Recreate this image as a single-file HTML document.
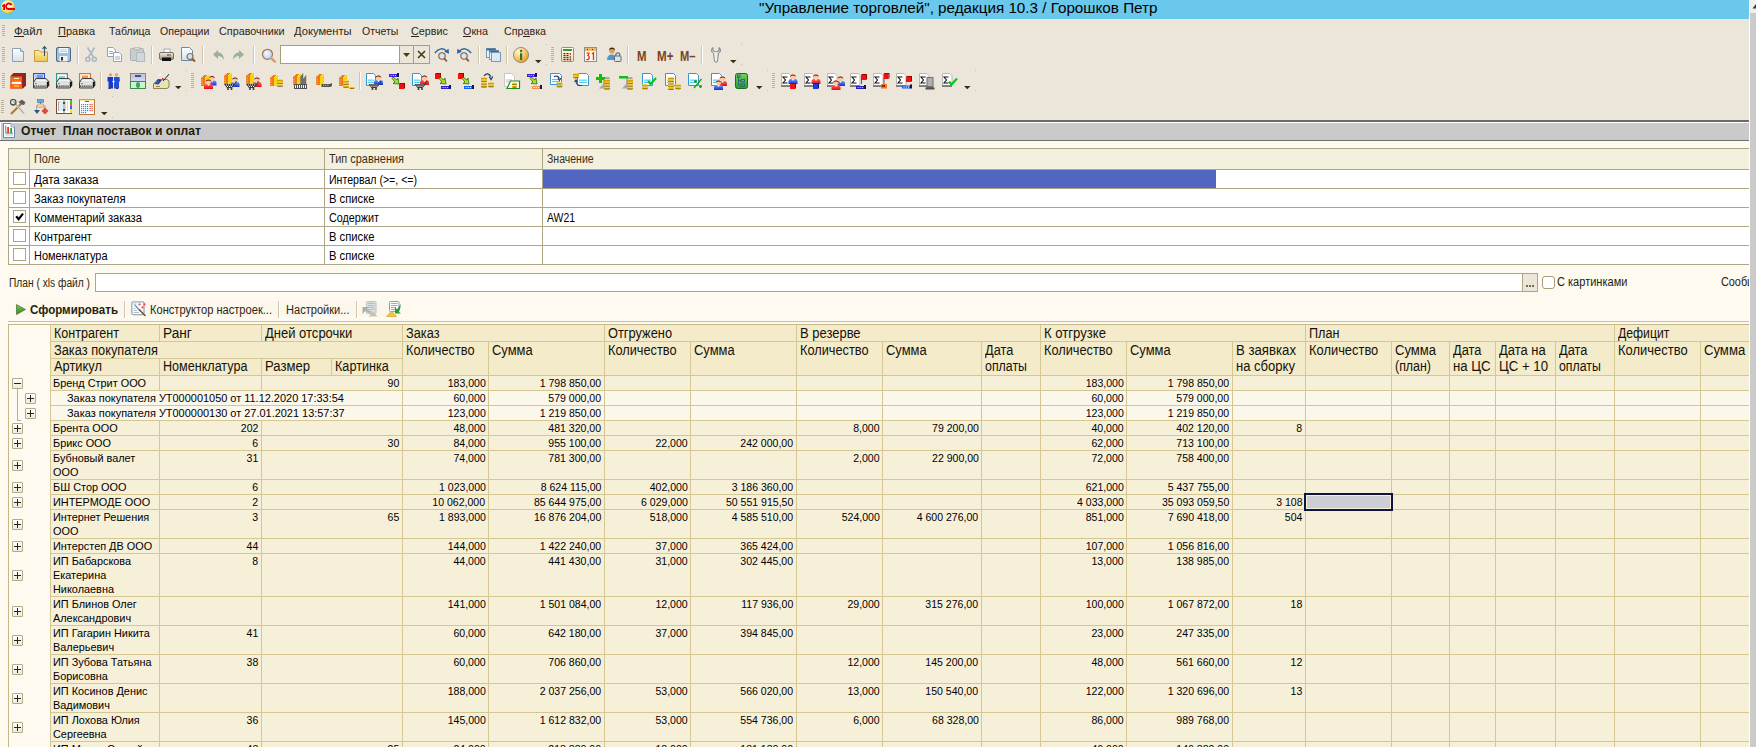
<!DOCTYPE html>
<html><head><meta charset="utf-8"><title>1C</title>
<style>
html,body{margin:0;padding:0}
body{width:1756px;height:747px;overflow:hidden;position:relative;background:#FDF9EF;font-family:"Liberation Sans",sans-serif}
div,span,svg{position:absolute;box-sizing:border-box}
.t{white-space:pre;line-height:1;transform-origin:0 0}
.t.r{transform-origin:100% 0}
</style></head><body>
<svg width="0" height="0" style="position:absolute"><defs><linearGradient id="gd" x1="0" y1="0" x2="0" y2="1"><stop offset="0" stop-color="#FFFFFF"/><stop offset="1" stop-color="#D2E0EC"/></linearGradient>
<linearGradient id="gfold" x1="0" y1="0" x2="0" y2="1"><stop offset="0" stop-color="#FBEBA6"/><stop offset="1" stop-color="#EEC650"/></linearGradient>
<linearGradient id="gprn" x1="0" y1="0" x2="0" y2="1"><stop offset="0" stop-color="#F6F2EC"/><stop offset="1" stop-color="#A08A74"/></linearGradient>
<radialGradient id="glens" cx="0.4" cy="0.4" r="0.6"><stop offset="0" stop-color="#F4F8FF"/><stop offset="1" stop-color="#BCD4F0"/></radialGradient>
<radialGradient id="ginfo" cx="0.35" cy="0.3" r="0.75"><stop offset="0" stop-color="#FFF6DC"/><stop offset="0.55" stop-color="#F8C870"/><stop offset="1" stop-color="#E89428"/></radialGradient>
<linearGradient id="gcalc" x1="0" y1="0" x2="0" y2="1"><stop offset="0" stop-color="#FFFFFF"/><stop offset="1" stop-color="#F8D8A8"/></linearGradient>
<linearGradient id="gwr" x1="0" y1="0" x2="1" y2="0"><stop offset="0" stop-color="#C8C8C8"/><stop offset="0.5" stop-color="#F8F8F8"/><stop offset="1" stop-color="#A8A8A8"/></linearGradient>
<linearGradient id="gred" x1="0" y1="0" x2="0" y2="1"><stop offset="0" stop-color="#F86868"/><stop offset="1" stop-color="#E80808"/></linearGradient>
<linearGradient id="gblue" x1="0" y1="0" x2="0" y2="1"><stop offset="0" stop-color="#6A9AF0"/><stop offset="1" stop-color="#1030D8"/></linearGradient>
<linearGradient id="gcoin" x1="0" y1="0" x2="0" y2="1"><stop offset="0" stop-color="#FFF080"/><stop offset="0.5" stop-color="#E8B000"/><stop offset="1" stop-color="#6A4A00"/></linearGradient>
<radialGradient id="glogo" cx="0.45" cy="0.4" r="0.6"><stop offset="0" stop-color="#FFFCE8"/><stop offset="0.55" stop-color="#FAEFA0"/><stop offset="0.85" stop-color="#EED040"/><stop offset="1" stop-color="#C8A030"/></radialGradient>
<linearGradient id="gtree" x1="0" y1="0" x2="0" y2="1"><stop offset="0" stop-color="#70D060"/><stop offset="1" stop-color="#28A028"/></linearGradient></defs></svg>
<div style="left:0px;top:0px;width:1749px;height:19px;background:#6AC8EC"></div>
<svg style="left:0px;top:0px" width="16" height="15" viewBox="0 0 16 15"><circle cx="7.9" cy="6.9" r="6.9" fill="url(#glogo)"/><path d="M2 5.6 L4.2 3.9 H5 V10 H3.2 V6.2 L2 6.9 Z" fill="#E80000"/><path d="M11.6 5.2 A2.9 2.9 0 1 0 8 9.1" fill="none" stroke="#E80000" stroke-width="1.8"/><rect x="7.8" y="7.9" width="7.2" height="2.1" fill="#E80000"/></svg>
<span class="t" style="transform:scaleX(0.9820);left:758.5px;top:-0.03px;font-size:15.5px;color:#000;font-weight:400;">&quot;Управление торговлей&quot;, редакция 10.3 / Горошков Петр</span>
<div style="left:0px;top:19px;width:1749px;height:101px;background:#EBE5DA"></div>
<div style="left:2px;top:25px;width:3px;height:1px;background:#BDB394"></div>
<div style="left:2px;top:27px;width:3px;height:1px;background:#BDB394"></div>
<div style="left:2px;top:29px;width:3px;height:1px;background:#BDB394"></div>
<div style="left:2px;top:31px;width:3px;height:1px;background:#BDB394"></div>
<div style="left:2px;top:33px;width:3px;height:1px;background:#BDB394"></div>
<div style="left:2px;top:35px;width:3px;height:1px;background:#BDB394"></div>
<span class="t" style="transform:scaleX(1.0007);left:14px;top:25.79px;font-size:11.5px;color:#2E2612;font-weight:400;">Файл</span>
<div style="left:14px;top:36px;width:10px;height:1px;background:#2E2612"></div>
<span class="t" style="transform:scaleX(0.9573);left:58.2px;top:25.79px;font-size:11.5px;color:#2E2612;font-weight:400;">Правка</span>
<div style="left:58px;top:36px;width:8px;height:1px;background:#2E2612"></div>
<span class="t" style="transform:scaleX(0.9203);left:108.5px;top:25.79px;font-size:11.5px;color:#2E2612;font-weight:400;">Таблица</span>
<span class="t" style="transform:scaleX(0.9183);left:159.8px;top:25.79px;font-size:11.5px;color:#2E2612;font-weight:400;">Операции</span>
<span class="t" style="transform:scaleX(0.9401);left:218.5px;top:25.79px;font-size:11.5px;color:#2E2612;font-weight:400;">Справочники</span>
<span class="t" style="transform:scaleX(0.9716);left:294.4px;top:25.79px;font-size:11.5px;color:#2E2612;font-weight:400;">Документы</span>
<span class="t" style="transform:scaleX(0.9128);left:361.7px;top:25.79px;font-size:11.5px;color:#2E2612;font-weight:400;">Отчеты</span>
<span class="t" style="transform:scaleX(0.9342);left:410.7px;top:25.79px;font-size:11.5px;color:#2E2612;font-weight:400;">Сервис</span>
<div style="left:411px;top:36px;width:8px;height:1px;background:#2E2612"></div>
<span class="t" style="transform:scaleX(0.9389);left:462.9px;top:25.79px;font-size:11.5px;color:#2E2612;font-weight:400;">Окна</span>
<div style="left:463px;top:36px;width:8px;height:1px;background:#2E2612"></div>
<span class="t" style="transform:scaleX(0.9330);left:503.7px;top:25.79px;font-size:11.5px;color:#2E2612;font-weight:400;">Справка</span>
<div style="left:523px;top:36px;width:7px;height:1px;background:#2E2612"></div>
<div style="left:2px;top:47px;width:3px;height:1px;background:#BDB394"></div>
<div style="left:2px;top:49px;width:3px;height:1px;background:#BDB394"></div>
<div style="left:2px;top:51px;width:3px;height:1px;background:#BDB394"></div>
<div style="left:2px;top:53px;width:3px;height:1px;background:#BDB394"></div>
<div style="left:2px;top:55px;width:3px;height:1px;background:#BDB394"></div>
<div style="left:2px;top:57px;width:3px;height:1px;background:#BDB394"></div>
<div style="left:2px;top:59px;width:3px;height:1px;background:#BDB394"></div>
<div style="left:2px;top:61px;width:3px;height:1px;background:#BDB394"></div>
<svg style="left:12px;top:47px" width="18" height="17" viewBox="0 0 18 17"><path d="M0.5 1.5 H8.5 L11.5 4.5 V14.5 H0.5 Z" fill="url(#gd)" stroke="#8CA2B6"/><path d="M8.5 1.5 V4.5 H11.5" fill="#C9D6E2" stroke="#8CA2B6"/></svg>
<svg style="left:34px;top:46px" width="18" height="17" viewBox="0 0 18 17"><path d="M0.5 4.5 H5 L6.5 6 H13.5 V15.5 H0.5 Z" fill="url(#gfold)" stroke="#C49A3C"/><path d="M10.5 10 V1" stroke="#34506E" stroke-width="1.1"/><path d="M8.5 3 L10.5 0.5 L12.5 3" fill="none" stroke="#34506E" stroke-width="1.1"/></svg>
<svg style="left:56px;top:47px" width="18" height="17" viewBox="0 0 18 17"><rect x="0.5" y="0.5" width="14" height="14" rx="1.5" fill="#9EC1DD" stroke="#4E6884"/><rect x="3" y="1" width="9" height="5" fill="#F2F7FB"/><path d="M4 3 H11 M4 4.6 H11" stroke="#A8C8E0" stroke-width="0.8"/><rect x="3.5" y="9" width="8" height="5.5" fill="#F0F0F0"/><rect x="5" y="10" width="2" height="3.5" fill="#333"/></svg>
<svg style="left:85px;top:47px" width="18" height="17" viewBox="0 0 18 17"><g stroke="#A6B6C4" stroke-width="1.5" fill="none"><path d="M2.5 0.5 L8.5 10 M9.5 0.5 L3.5 10"/><circle cx="2.8" cy="12.3" r="2"/><circle cx="9.3" cy="12.3" r="2"/></g></svg>
<svg style="left:107px;top:47px" width="18" height="17" viewBox="0 0 18 17"><path d="M0.5 0.5 H6 L8.5 3 V9.5 H0.5 Z" fill="#FFF" stroke="#8CA2B6"/><path d="M6.5 5.5 H12 L14.5 8 V14.5 H6.5 Z" fill="#FFF" stroke="#8CA2B6"/><path d="M2 4.5 H6 M2 6.5 H6 M8 10 H13 M8 12 H13" stroke="#7A98B0" stroke-width="0.8"/></svg>
<svg style="left:130px;top:47px" width="18" height="17" viewBox="0 0 18 17"><rect x="0.5" y="1.5" width="13" height="12" rx="1" fill="#C8CDD2" stroke="#A8B0B8"/><rect x="4" y="0" width="6" height="3" rx="1" fill="#DCDCCC" stroke="#B0A890" stroke-width="0.8"/><rect x="6.5" y="5.5" width="8" height="9" fill="#D2D6DA" stroke="#B0B8C0"/></svg>
<svg style="left:159px;top:47px" width="18" height="17" viewBox="0 0 18 17"><rect x="5" y="2" width="6" height="5" fill="#FFF" stroke="#90A0B0" stroke-width="0.8"/><rect x="0.5" y="5.5" width="14" height="7" rx="1.5" fill="url(#gprn)" stroke="#707070"/><rect x="3" y="10.5" width="9" height="3.5" fill="#111"/><circle cx="9" cy="8" r="0.9" fill="#E02020"/><circle cx="11" cy="8" r="0.9" fill="#20B020"/></svg>
<svg style="left:181px;top:47px" width="18" height="17" viewBox="0 0 18 17"><path d="M0.5 0.5 H8.5 L11.5 3.5 V13.5 H0.5 Z" fill="url(#gd)" stroke="#6A8AA6"/><circle cx="9" cy="9.5" r="3" fill="#CFE0F4" stroke="#9A6A44" stroke-width="1.2"/><path d="M11 11.5 L14 14.5" stroke="#8A5A34" stroke-width="2"/></svg>
<svg style="left:213px;top:47px" width="18" height="17" viewBox="0 0 18 17"><path d="M0 7.5 L5 3 V5.5 C8.5 5.5 11 8 11 13 C9.5 10 8 9 5 9 V12 Z" fill="#9DB09A"/></svg>
<svg style="left:233px;top:47px" width="18" height="17" viewBox="0 0 18 17"><path d="M11 7.5 L6 3 V5.5 C2.5 5.5 0 8 0 13 C1.5 10 3 9 6 9 V12 Z" fill="#9DB09A"/></svg>
<svg style="left:261px;top:47px" width="18" height="17" viewBox="0 0 18 17"><circle cx="6.5" cy="7.3" r="5" fill="url(#glens)" stroke="#A27450" stroke-width="1.2"/><path d="M10.3 11.2 L13.8 14.6" stroke="#D4A07A" stroke-width="2.6" stroke-linecap="round"/></svg>
<div style="left:77px;top:46px;width:1px;height:18px;background:#CFC6AC"></div>
<div style="left:78px;top:46px;width:1px;height:18px;background:#FFFFFF"></div>
<div style="left:151px;top:46px;width:1px;height:18px;background:#CFC6AC"></div>
<div style="left:152px;top:46px;width:1px;height:18px;background:#FFFFFF"></div>
<div style="left:202px;top:46px;width:1px;height:18px;background:#CFC6AC"></div>
<div style="left:203px;top:46px;width:1px;height:18px;background:#FFFFFF"></div>
<div style="left:253px;top:46px;width:1px;height:18px;background:#CFC6AC"></div>
<div style="left:254px;top:46px;width:1px;height:18px;background:#FFFFFF"></div>
<div style="left:280px;top:45px;width:150px;height:19px;background:#A79E7C"></div>
<div style="left:281px;top:46px;width:118px;height:17px;background:#FFFFFF"></div>
<div style="left:400px;top:46px;width:13px;height:17px;background:#EBE5DA"></div>
<div style="left:414px;top:46px;width:15px;height:17px;background:#EBE5DA"></div>
<svg style="left:403px;top:53px" width="7" height="4" viewBox="0 0 7 4"><path d="M0 0 L7 0 L3.5 4 Z" fill="#4A3A10"/></svg>
<svg style="left:417px;top:50px" width="9" height="9" viewBox="0 0 9 9"><path d="M1 1 L8 8 M8 1 L1 8" stroke="#4A3A10" stroke-width="1.6"/></svg>
<svg style="left:434px;top:47px" width="18" height="17" viewBox="0 0 18 17"><path d="M0.8 6 Q7 -1.5 13 4.2" fill="none" stroke="#2A64A0" stroke-width="1.3"/><path d="M10.2 4.8 L15 6.8 L14.6 1.8 Z" fill="#2A64A0"/><circle cx="8" cy="9" r="3.2" fill="#D4E4F6" stroke="#8A5A3A" stroke-width="1.1"/><path d="M10.2 11.4 L12.8 14.4" stroke="#8A5A3A" stroke-width="1.8"/></svg>
<svg style="left:457px;top:47px" width="18" height="17" viewBox="0 0 18 17"><path d="M14.2 6 Q8 -1.5 2 4.2" fill="none" stroke="#2A64A0" stroke-width="1.3"/><path d="M4.8 4.8 L0 6.8 L0.4 1.8 Z" fill="#2A64A0"/><circle cx="7" cy="9" r="3.2" fill="#D4E4F6" stroke="#8A5A3A" stroke-width="1.1"/><path d="M9.2 11.4 L11.8 14.4" stroke="#8A5A3A" stroke-width="1.8"/></svg>
<svg style="left:486px;top:47px" width="18" height="17" viewBox="0 0 18 17"><rect x="0.5" y="1.5" width="9" height="9" fill="#E8F0F8" stroke="#7A9AB8"/><rect x="0.5" y="1.5" width="9" height="2" fill="#3E6A96"/><rect x="3.5" y="3.5" width="9" height="9" fill="#E8F0F8" stroke="#7A9AB8"/><rect x="3.5" y="3.5" width="9" height="2" fill="#3E6A96"/><rect x="5.5" y="5.5" width="9" height="9" fill="#DCE8F4" stroke="#7A9AB8"/></svg>
<svg style="left:513px;top:47px" width="18" height="17" viewBox="0 0 18 17"><circle cx="8" cy="8" r="7.6" fill="url(#ginfo)" stroke="#8A7E6A" stroke-width="0.8"/><rect x="7" y="6.2" width="2.2" height="6.8" fill="#2E7A1E"/><circle cx="8.1" cy="4" r="1.2" fill="#2E7A1E"/></svg>
<div style="left:478px;top:46px;width:1px;height:18px;background:#CFC6AC"></div>
<div style="left:479px;top:46px;width:1px;height:18px;background:#FFFFFF"></div>
<div style="left:506px;top:46px;width:1px;height:18px;background:#CFC6AC"></div>
<div style="left:507px;top:46px;width:1px;height:18px;background:#FFFFFF"></div>
<svg style="left:535px;top:60px" width="7" height="4" viewBox="0 0 7 4"><path d="M0 0 H6.5 L3.25 3.2 Z" fill="#3A2E10"/></svg>
<div style="left:546px;top:44px;width:1px;height:1px;background:#C8BFA8"></div>
<div style="left:546px;top:64px;width:1px;height:1px;background:#C8BFA8"></div>
<div style="left:551px;top:47px;width:3px;height:1px;background:#BDB394"></div>
<div style="left:551px;top:49px;width:3px;height:1px;background:#BDB394"></div>
<div style="left:551px;top:51px;width:3px;height:1px;background:#BDB394"></div>
<div style="left:551px;top:53px;width:3px;height:1px;background:#BDB394"></div>
<div style="left:551px;top:55px;width:3px;height:1px;background:#BDB394"></div>
<div style="left:551px;top:57px;width:3px;height:1px;background:#BDB394"></div>
<div style="left:551px;top:59px;width:3px;height:1px;background:#BDB394"></div>
<div style="left:551px;top:61px;width:3px;height:1px;background:#BDB394"></div>
<svg style="left:561px;top:47px" width="18" height="17" viewBox="0 0 18 17"><rect x="0.5" y="0.5" width="12" height="14" rx="1" fill="url(#gcalc)" stroke="#8A9098"/><rect x="2" y="2" width="9" height="2" fill="#3A9A2A"/><rect x="2.5" y="6" width="2" height="1.2" fill="#333"/><rect x="2.5" y="8" width="2" height="1.2" fill="#333"/><rect x="2.5" y="10" width="2" height="1.2" fill="#333"/><rect x="2.5" y="12" width="2" height="1.2" fill="#333"/><rect x="5.5" y="6" width="2" height="1.2" fill="#333"/><rect x="5.5" y="8" width="2" height="1.2" fill="#333"/><rect x="5.5" y="10" width="2" height="1.2" fill="#333"/><rect x="5.5" y="12" width="2" height="1.2" fill="#333"/><rect x="8.7" y="6" width="1.2" height="2" fill="#E02020"/><circle cx="9.3" cy="10" r="0.8" fill="#333"/><rect x="8.7" y="11.5" width="1.2" height="2" fill="#333"/></svg>
<svg style="left:584px;top:47px" width="18" height="17" viewBox="0 0 18 17"><rect x="0.5" y="0.5" width="12" height="14" fill="#FFF6E8" stroke="#8A9098"/><rect x="1" y="1" width="11" height="3" fill="#F2B860"/><rect x="3" y="2" width="1" height="1" fill="#333"/><rect x="8" y="2" width="1" height="1" fill="#333"/><path d="M2.5 6 H5 L3.8 8.5 Q5.5 8.8 5.2 11 Q4.6 13.2 2.3 12.5" fill="none" stroke="#E03020" stroke-width="1.2"/><path d="M8 7 L9.5 5.8 V13" fill="none" stroke="#E03020" stroke-width="1.3"/></svg>
<svg style="left:607px;top:47px" width="18" height="17" viewBox="0 0 18 17"><circle cx="5" cy="3.8" r="2.8" fill="#E0A050"/><path d="M2 3.5 A3 3 0 0 1 8 3.5 L7.2 2.5 Q5 1.5 2.8 2.5 Z" fill="#3A2A1A"/><path d="M0 13 Q0 7.5 5 7.5 Q7.5 7.5 8.5 9 V13 Z" fill="#4A9AD0"/><rect x="7.5" y="9" width="6.5" height="5.5" rx="1" fill="#DDE4EA" stroke="#5A6A78"/><path d="M8.8 9 V7.8 A2 2 0 0 1 12.8 7.8 V9" fill="none" stroke="#5A6A78" stroke-width="1.2"/></svg>
<div style="left:627px;top:46px;width:1px;height:18px;background:#CFC6AC"></div>
<div style="left:628px;top:46px;width:1px;height:18px;background:#FFFFFF"></div>
<span class="t" style="transform:scaleX(0.8139);left:636.8px;top:48.63px;font-size:14px;color:#7A4420;font-weight:700;">M</span>
<span class="t" style="transform:scaleX(0.8315);left:656.8px;top:48.63px;font-size:14px;color:#7A4420;font-weight:700;">M+</span>
<span class="t" style="transform:scaleX(0.7968);left:679.8px;top:48.63px;font-size:14px;color:#7A4420;font-weight:700;">M–</span>
<div style="left:701px;top:46px;width:1px;height:18px;background:#CFC6AC"></div>
<div style="left:702px;top:46px;width:1px;height:18px;background:#FFFFFF"></div>
<svg style="left:711px;top:47px" width="11" height="17" viewBox="0 0 11 17"><path d="M2 0.5 C-0.2 2 0 5.2 2.6 6.5 L3.5 14 C3.6 15.6 6.4 15.6 6.5 14 L7.4 6.5 C10 5.2 10.2 2 8 0.5 V3.6 L5 5 L2 3.6 Z" fill="url(#gwr)" stroke="#6E6E6E" stroke-width="0.8"/></svg>
<svg style="left:730px;top:60px" width="7" height="4" viewBox="0 0 7 4"><path d="M0 0 H6.5 L3.25 3.2 Z" fill="#3A2E10"/></svg>
<div style="left:741px;top:44px;width:1px;height:1px;background:#C8BFA8"></div>
<div style="left:741px;top:64px;width:1px;height:1px;background:#C8BFA8"></div>
<div style="left:2px;top:73px;width:3px;height:1px;background:#BDB394"></div>
<div style="left:2px;top:75px;width:3px;height:1px;background:#BDB394"></div>
<div style="left:2px;top:77px;width:3px;height:1px;background:#BDB394"></div>
<div style="left:2px;top:79px;width:3px;height:1px;background:#BDB394"></div>
<div style="left:2px;top:81px;width:3px;height:1px;background:#BDB394"></div>
<div style="left:2px;top:83px;width:3px;height:1px;background:#BDB394"></div>
<div style="left:2px;top:85px;width:3px;height:1px;background:#BDB394"></div>
<div style="left:2px;top:87px;width:3px;height:1px;background:#BDB394"></div>
<svg style="left:10px;top:73px" width="17" height="17" viewBox="0 0 17 17"><path d="M0.5 3 L3.5 0 H16 V12.5 L13 15.5 H0.5 Z" fill="#8A2828"/><rect x="1" y="3.5" width="11" height="4.5" fill="#FF6A10"/><rect x="4" y="5" width="5" height="1" fill="#F8F0A0"/><rect x="1.5" y="8.5" width="10" height="2.5" fill="#F8F8F8"/><rect x="0" y="11" width="12" height="4.5" fill="#FF6A10"/><rect x="4" y="12.5" width="5" height="1" fill="#F8F0A0"/></svg>
<svg style="left:33px;top:73px" width="18" height="17" viewBox="0 0 18 17"><rect x="0.6" y="0.6" width="10.8" height="7.8" fill="#FFFFFF" stroke="#1850F0" stroke-width="1.2"/><rect x="2" y="2" width="8" height="4" fill="#A8C8F8"/><path d="M5 1.5 V7 M7 1.5 V7 M9 1.5 V7" stroke="#1850F0" stroke-width="0.8"/><path d="M0.5 9.5 L3 5.5 H13 L15.8 8.5 V12.5 L13.8 15 H0.5 Z" fill="#D0D0D0" stroke="#303030" stroke-width="0.9"/><path d="M3.5 6.5 H12.5 L14.5 8.5 H1.8 Z" fill="#F4F4F4"/><rect x="1" y="9.5" width="13" height="2.2" fill="#E6E6E6"/><rect x="2" y="10" width="1.6" height="1.2" fill="#10C010"/><path d="M1 13.3 H13.5" stroke="#505050" stroke-width="1.6" stroke-dasharray="1.2 0.9"/><path d="M13.8 9 L15.8 8.5 V12.5 L13.8 15 Z" fill="#101010"/></svg>
<svg style="left:56px;top:73px" width="18" height="17" viewBox="0 0 18 17"><rect x="0.6" y="0.6" width="10.8" height="7.8" fill="#FFFFFF" stroke="#20A0A0" stroke-width="1.2"/><path d="M3 4 H9 M3 6 H8" stroke="#20A0A0" stroke-width="1.2"/><path d="M0.5 9.5 L3 5.5 H13 L15.8 8.5 V12.5 L13.8 15 H0.5 Z" fill="#D0D0D0" stroke="#303030" stroke-width="0.9"/><path d="M3.5 6.5 H12.5 L14.5 8.5 H1.8 Z" fill="#F4F4F4"/><rect x="1" y="9.5" width="13" height="2.2" fill="#E6E6E6"/><rect x="2" y="10" width="1.6" height="1.2" fill="#10C010"/><path d="M1 13.3 H13.5" stroke="#505050" stroke-width="1.6" stroke-dasharray="1.2 0.9"/><path d="M13.8 9 L15.8 8.5 V12.5 L13.8 15 Z" fill="#101010"/></svg>
<svg style="left:79px;top:73px" width="18" height="17" viewBox="0 0 18 17"><rect x="0.6" y="0.6" width="10.8" height="7.8" fill="#FFFFFF" stroke="#F07010" stroke-width="1.2"/><rect x="3" y="2.5" width="6" height="3" fill="#F89050"/><path d="M0.5 9.5 L3 5.5 H13 L15.8 8.5 V12.5 L13.8 15 H0.5 Z" fill="#D0D0D0" stroke="#303030" stroke-width="0.9"/><path d="M3.5 6.5 H12.5 L14.5 8.5 H1.8 Z" fill="#F4F4F4"/><rect x="1" y="9.5" width="13" height="2.2" fill="#E6E6E6"/><rect x="2" y="10" width="1.6" height="1.2" fill="#10C010"/><path d="M1 13.3 H13.5" stroke="#505050" stroke-width="1.6" stroke-dasharray="1.2 0.9"/><path d="M13.8 9 L15.8 8.5 V12.5 L13.8 15 Z" fill="#101010"/></svg>
<svg style="left:107px;top:73px" width="14" height="17" viewBox="0 0 14 17"><circle cx="3.5" cy="1.8" r="1.6" fill="#D8A070"/><circle cx="9.5" cy="1.8" r="1.6" fill="#D8A070"/><path d="M0.5 4 H6 V15.5 H1.5 V8 L0.5 9 Z" fill="#1838C8"/><path d="M7 4 H12.5 L13 9 L12 8 V15.5 H7 Z" fill="#2050D8"/><path d="M5 8.5 L6.5 7.5 L8 8.5 L6.5 10 Z" fill="#FFFFFF"/><rect x="1.5" y="15" width="2" height="1" fill="#602020"/><rect x="9" y="15" width="2" height="1" fill="#602020"/></svg>
<svg style="left:130px;top:73px" width="17" height="17" viewBox="0 0 17 17"><rect x="0.5" y="0.5" width="15" height="15" fill="#D8E8D8" stroke="#707070" stroke-width="0.8"/><rect x="1" y="1" width="14" height="4" fill="#C8C8C8"/><rect x="1" y="5" width="14" height="3.5" fill="#D0D0F8"/><rect x="0.5" y="8.5" width="15" height="7" fill="#C8F8C8" stroke="#408A50"/><ellipse cx="8" cy="12" rx="2" ry="3" fill="#40A070"/><rect x="5" y="2" width="6" height="2" fill="#4050A0"/></svg>
<svg style="left:153px;top:73px" width="17" height="17" viewBox="0 0 17 17"><path d="M0.5 11 L5 6.5 H14 L16 8 V14 L14 15.5 H0.5 Z" fill="#E8E4B8" stroke="#707040" stroke-width="0.8"/><path d="M1 11 L5 6 L9 7 L5.5 11.5 Z" fill="#2040A0"/><path d="M2.5 10 H5 M3.5 8.5 H6.5" stroke="#80C0E0" stroke-width="0.7" stroke-dasharray="0.8 0.8"/><rect x="9" y="5" width="1.5" height="1.5" fill="#F02020"/><path d="M10 8 L14.5 3 Q15.5 1.5 16 1" fill="none" stroke="#202020" stroke-width="1"/><circle cx="7" cy="1.6" r="1.6" fill="#F0F0FF"/><rect x="3" y="13" width="4" height="1" fill="#C87030"/></svg>
<div style="left:100px;top:72px;width:1px;height:18px;background:#CFC6AC"></div>
<div style="left:101px;top:72px;width:1px;height:18px;background:#FFFFFF"></div>
<svg style="left:175px;top:86px" width="7" height="4" viewBox="0 0 7 4"><path d="M0 0 H6.5 L3.25 3.2 Z" fill="#3A2E10"/></svg>
<div style="left:186px;top:70px;width:1px;height:1px;background:#C8BFA8"></div>
<div style="left:186px;top:90px;width:1px;height:1px;background:#C8BFA8"></div>
<div style="left:191px;top:73px;width:3px;height:1px;background:#BDB394"></div>
<div style="left:191px;top:75px;width:3px;height:1px;background:#BDB394"></div>
<div style="left:191px;top:77px;width:3px;height:1px;background:#BDB394"></div>
<div style="left:191px;top:79px;width:3px;height:1px;background:#BDB394"></div>
<div style="left:191px;top:81px;width:3px;height:1px;background:#BDB394"></div>
<div style="left:191px;top:83px;width:3px;height:1px;background:#BDB394"></div>
<div style="left:191px;top:85px;width:3px;height:1px;background:#BDB394"></div>
<div style="left:191px;top:87px;width:3px;height:1px;background:#BDB394"></div>
<svg style="left:201px;top:73px" width="18" height="17" viewBox="0 0 18 17"><path d="M0 4.5 L2.5 2 H8 V10.5 L5.5 13 H0 Z" fill="#F07818"/><path d="M4 4.5 L6.5 2 H8 V10.5 L6.5 13 H4 Z" fill="#F6D400"/><path d="M1 6.5 V12 M5 6.5 V12" stroke="#FFE8A0" stroke-width="0.8" stroke-dasharray="1 1.2"/><path d="M0.5 4.5 L3 2 M4.5 4.5 L7 2" stroke="#FFF0C0" stroke-width="0.8"/><path d="M6.5 12.5 V9.5 Q6.5 7.5 9.0 7.5 H13.0 Q15.5 7.5 15.5 9.5 V12.5 Z" fill="url(#gblue)"/><path d="M9.5 7.5 L11.0 9.5 L12.5 7.5 Z" fill="#F0F0F0"/><circle cx="11.0" cy="5.1" r="2.6" fill="#FFC8A0"/><path d="M8.2 5.7 A2.8 2.8 0 0 1 13.8 5.7 L13.3 4.7 Q11.0 3.5 8.7 4.7 Z" fill="#6A1A10"/><path d="M3 16 V13 Q3 11 5.5 11 H9.5 Q12 11 12 13 V16 Z" fill="url(#gred)"/><path d="M6 11 L7.5 13 L9 11 Z" fill="#F0F0F0"/><circle cx="7.5" cy="8.6" r="2.6" fill="#FFC8A0"/><path d="M4.7 9.2 A2.8 2.8 0 0 1 10.3 9.2 L9.8 8.2 Q7.5 7 5.2 8.2 Z" fill="#6A1A10"/></svg>
<svg style="left:224px;top:73px" width="18" height="17" viewBox="0 0 18 17"><path d="M0 2.5 L2.5 0 H8 V8.5 L5.5 11 H0 Z" fill="#F07818"/><path d="M4 2.5 L6.5 0 H8 V8.5 L6.5 11 H4 Z" fill="#F6D400"/><path d="M1 4.5 V10 M5 4.5 V10" stroke="#FFE8A0" stroke-width="0.8" stroke-dasharray="1 1.2"/><path d="M0.5 2.5 L3 0 M4.5 2.5 L7 0" stroke="#FFF0C0" stroke-width="0.8"/><path d="M6.5 14 V11 Q6.5 9 9.0 9 H13.0 Q15.5 9 15.5 11 V14 Z" fill="url(#gblue)"/><path d="M9.5 9 L11.0 11 L12.5 9 Z" fill="#F0F0F0"/><circle cx="11.0" cy="6.6" r="2.6" fill="#FFC8A0"/><path d="M8.2 7.2 A2.8 2.8 0 0 1 13.8 7.2 L13.3 6.2 Q11.0 5 8.7 6.2 Z" fill="#6A1A10"/><path d="M0 11 H10 L12 8 L13 8.6 L10.6 12 L8 15 H3 Z" fill="#3A3A3A"/><path d="M2 12 H9 M3 13.5 H8" stroke="#FFFFFF" stroke-width="0.9" stroke-dasharray="1 1"/><circle cx="4" cy="16" r="1" fill="#303030"/><circle cx="7.5" cy="16" r="1" fill="#303030"/></svg>
<svg style="left:246px;top:73px" width="18" height="17" viewBox="0 0 18 17"><path d="M0 2.5 L2.5 0 H8 V8.5 L5.5 11 H0 Z" fill="#F07818"/><path d="M4 2.5 L6.5 0 H8 V8.5 L6.5 11 H4 Z" fill="#F6D400"/><path d="M1 4.5 V10 M5 4.5 V10" stroke="#FFE8A0" stroke-width="0.8" stroke-dasharray="1 1.2"/><path d="M0.5 2.5 L3 0 M4.5 2.5 L7 0" stroke="#FFF0C0" stroke-width="0.8"/><path d="M6.5 14 V11 Q6.5 9 9.0 9 H13.0 Q15.5 9 15.5 11 V14 Z" fill="url(#gred)"/><path d="M9.5 9 L11.0 11 L12.5 9 Z" fill="#F0F0F0"/><circle cx="11.0" cy="6.6" r="2.6" fill="#FFC8A0"/><path d="M8.2 7.2 A2.8 2.8 0 0 1 13.8 7.2 L13.3 6.2 Q11.0 5 8.7 6.2 Z" fill="#6A1A10"/><path d="M0 11 H10 L12 8 L13 8.6 L10.6 12 L8 15 H3 Z" fill="#3A3A3A"/><path d="M2 12 H9 M3 13.5 H8" stroke="#FFFFFF" stroke-width="0.9" stroke-dasharray="1 1"/><circle cx="4" cy="16" r="1" fill="#303030"/><circle cx="7.5" cy="16" r="1" fill="#303030"/></svg>
<svg style="left:270px;top:73px" width="18" height="17" viewBox="0 0 18 17"><path d="M0 4.5 L2.5 2 H8 V10.5 L5.5 13 H0 Z" fill="#F07818"/><path d="M4 4.5 L6.5 2 H8 V10.5 L6.5 13 H4 Z" fill="#F6D400"/><path d="M1 6.5 V12 M5 6.5 V12" stroke="#FFE8A0" stroke-width="0.8" stroke-dasharray="1 1.2"/><path d="M0.5 4.5 L3 2 M4.5 4.5 L7 2" stroke="#FFF0C0" stroke-width="0.8"/><rect x="7" y="6.0" width="6" height="2.6" rx="1.2" fill="url(#gcoin)"/><rect x="7" y="8.6" width="6" height="2.6" rx="1.2" fill="url(#gcoin)"/><rect x="7" y="11.2" width="6" height="2.6" rx="1.2" fill="url(#gcoin)"/></svg>
<svg style="left:293px;top:73px" width="16" height="17" viewBox="0 0 16 17"><path d="M0 3.5 L2.5 1 H8 V9.5 L5.5 12 H0 Z" fill="#F07818"/><path d="M4 3.5 L6.5 1 H8 V9.5 L6.5 12 H4 Z" fill="#F6D400"/><path d="M1 5.5 V11 M5 5.5 V11" stroke="#FFE8A0" stroke-width="0.8" stroke-dasharray="1 1.2"/><path d="M0.5 3.5 L3 1 M4.5 3.5 L7 1" stroke="#FFF0C0" stroke-width="0.8"/><path d="M8 14 V4 L9.5 2 V14 M11 14 V6 L12.5 4 V14" stroke="#707070" stroke-width="1.5" fill="none"/><rect x="1" y="11" width="13" height="5" fill="#505050"/><path d="M2.5 12 V15 M4.5 12 V15 M6.5 12 V15 M8.5 12 V15 M10.5 12 V15 M12.5 12 V15" stroke="#F0F0F0" stroke-width="1"/></svg>
<svg style="left:316px;top:73px" width="17" height="17" viewBox="0 0 17 17"><path d="M0 3.5 L2.5 1 H8 V9.5 L5.5 12 H0 Z" fill="#F07818"/><path d="M4 3.5 L6.5 1 H8 V9.5 L6.5 12 H4 Z" fill="#F6D400"/><path d="M1 5.5 V11 M5 5.5 V11" stroke="#FFE8A0" stroke-width="0.8" stroke-dasharray="1 1.2"/><path d="M0.5 3.5 L3 1 M4.5 3.5 L7 1" stroke="#FFF0C0" stroke-width="0.8"/><path d="M5.5 11 H14 L16 10 V13 L14 14 H5.5 Z" fill="#505050"/><path d="M7 12.3 H13" stroke="#D8D8D8" stroke-width="1" stroke-dasharray="1 1.2"/></svg>
<svg style="left:339px;top:73px" width="17" height="17" viewBox="0 0 17 17"><path d="M0 4.5 L2.5 2 H8 V10.5 L5.5 13 H0 Z" fill="#F07818"/><path d="M4 4.5 L6.5 2 H8 V10.5 L6.5 13 H4 Z" fill="#F6D400"/><path d="M1 6.5 V12 M5 6.5 V12" stroke="#FFE8A0" stroke-width="0.8" stroke-dasharray="1 1.2"/><path d="M0.5 4.5 L3 2 M4.5 4.5 L7 2" stroke="#FFF0C0" stroke-width="0.8"/><rect x="4" y="7.0" width="6" height="2.6" rx="1.2" fill="url(#gcoin)"/><rect x="4" y="9.6" width="6" height="2.6" rx="1.2" fill="url(#gcoin)"/><rect x="4" y="12.2" width="6" height="2.6" rx="1.2" fill="url(#gcoin)"/><rect x="10.5" y="13.5" width="5" height="2.6" rx="1.2" fill="url(#gcoin)"/></svg>
<div style="left:359px;top:72px;width:1px;height:18px;background:#CFC6AC"></div>
<div style="left:360px;top:72px;width:1px;height:18px;background:#FFFFFF"></div>
<svg style="left:366px;top:73px" width="18" height="17" viewBox="0 0 18 17"><path d="M0.5 0.5 H7.5 L9.5 2.5 V12.5 H0.5 Z" fill="#FFFFFF" stroke="#3A96D0"/><path d="M2 7.15 H8 M2 9.36 H8" stroke="#18C0F0" stroke-width="0.9"/><path d="M8 12 V9 Q8 7 10.5 7 H14.5 Q17 7 17 9 V12 Z" fill="url(#gblue)"/><path d="M11 7 L12.5 9 L14 7 Z" fill="#F0F0F0"/><circle cx="12.5" cy="4.6" r="2.6" fill="#FFC8A0"/><path d="M9.7 5.2 A2.8 2.8 0 0 1 15.3 5.2 L14.8 4.2 Q12.5 3 10.2 4.2 Z" fill="#6A1A10"/><path d="M2.5 11 H12.5 L14.5 8 L15.5 8.6 L13.1 12 L10.5 15 H5.5 Z" fill="#3A3A3A"/><path d="M4.5 12 H11.5 M5.5 13.5 H10.5" stroke="#FFFFFF" stroke-width="0.9" stroke-dasharray="1 1"/><circle cx="6.5" cy="16" r="1" fill="#303030"/><circle cx="10.0" cy="16" r="1" fill="#303030"/></svg>
<svg style="left:389px;top:73px" width="18" height="17" viewBox="0 0 18 17"><path d="M0 1 H8 L10 0 V3 L8 4 H0 Z" fill="#4020E0"/><rect x="8" y="0" width="2" height="4" fill="#101850"/><path d="M1.5 2.5 H7" stroke="#F0E000" stroke-width="1.1" stroke-dasharray="1.1 1.1"/><path d="M4 4 L8 7 L9 5 L10 11 L4 10.5 L6 9 L3 5.5 Z" fill="#A8E020" stroke="#1A6010" stroke-width="0.7"/><rect x="10" y="11" width="5" height="5" fill="#F01010"/><path d="M10 11 L11 10 H16 V15 L15 16 V11 Z" fill="#A00000"/></svg>
<svg style="left:412px;top:73px" width="18" height="17" viewBox="0 0 18 17"><path d="M0.5 0.5 H7.5 L9.5 2.5 V12.5 H0.5 Z" fill="#FFFFFF" stroke="#3A96D0"/><path d="M2 7.15 H8 M2 9.36 H8" stroke="#18C0F0" stroke-width="0.9"/><path d="M8 12 V9 Q8 7 10.5 7 H14.5 Q17 7 17 9 V12 Z" fill="url(#gred)"/><path d="M11 7 L12.5 9 L14 7 Z" fill="#F0F0F0"/><circle cx="12.5" cy="4.6" r="2.6" fill="#FFC8A0"/><path d="M9.7 5.2 A2.8 2.8 0 0 1 15.3 5.2 L14.8 4.2 Q12.5 3 10.2 4.2 Z" fill="#6A1A10"/><path d="M2.5 11 H12.5 L14.5 8 L15.5 8.6 L13.1 12 L10.5 15 H5.5 Z" fill="#3A3A3A"/><path d="M4.5 12 H11.5 M5.5 13.5 H10.5" stroke="#FFFFFF" stroke-width="0.9" stroke-dasharray="1 1"/><circle cx="6.5" cy="16" r="1" fill="#303030"/><circle cx="10.0" cy="16" r="1" fill="#303030"/></svg>
<svg style="left:435px;top:73px" width="18" height="17" viewBox="0 0 18 17"><rect x="0" y="1" width="5" height="5" fill="#F01010"/><path d="M0 1 L1 0 H6 V5 L5 6 V1 Z" fill="#A00000"/><path d="M5 4 L9 7 L10 5 L11 11 L5 10.5 L7 9 L4 5.5 Z" fill="#A8E020" stroke="#1A6010" stroke-width="0.7"/><path d="M6 13 H14 L16 12 V15 L14 16 H6 Z" fill="#3020D8"/><rect x="14" y="12" width="2" height="4" fill="#101850"/><path d="M7.5 14.5 H13" stroke="#F0E000" stroke-width="1.1" stroke-dasharray="1.1 1.1"/></svg>
<svg style="left:458px;top:73px" width="18" height="17" viewBox="0 0 18 17"><rect x="0" y="1" width="5" height="5" fill="#F01010"/><path d="M0 1 L1 0 H6 V5 L5 6 V1 Z" fill="#A00000"/><path d="M5 4 L9 7 L10 5 L11 11 L5 10.5 L7 9 L4 5.5 Z" fill="#A8E020" stroke="#1A6010" stroke-width="0.7"/><path d="M6 13 H14 L16 12 V15 L14 16 H6 Z" fill="#1860F0"/><rect x="14" y="12" width="2" height="4" fill="#101850"/><path d="M7.5 14.5 H13" stroke="#FFFFFF" stroke-width="1.1" stroke-dasharray="1.1 1.1"/></svg>
<svg style="left:481px;top:73px" width="17" height="17" viewBox="0 0 17 17"><rect x="0" y="4.0" width="6" height="2.6" rx="1.2" fill="url(#gcoin)"/><rect x="0" y="6.6" width="6" height="2.6" rx="1.2" fill="url(#gcoin)"/><rect x="0" y="9.2" width="6" height="2.6" rx="1.2" fill="url(#gcoin)"/><rect x="0" y="11.8" width="6" height="2.6" rx="1.2" fill="url(#gcoin)"/><rect x="7" y="9.0" width="6" height="2.6" rx="1.2" fill="url(#gcoin)"/><rect x="7" y="11.6" width="6" height="2.6" rx="1.2" fill="url(#gcoin)"/><path d="M3 3 Q6.5 -1.5 10 3.5" fill="none" stroke="#1A3A6A" stroke-width="1.2"/><path d="M8.2 3.5 L10 6.5 L11.8 3.5" fill="none" stroke="#1A3A6A" stroke-width="1.2"/></svg>
<svg style="left:504px;top:73px" width="17" height="17" viewBox="0 0 17 17"><path d="M0.5 0.5 H7.5 L10.5 3.5 V13.5 H0.5 Z" fill="#FFFFFF" stroke="#C8C8C8"/><path d="M2 7 H8 M2 9 H8" stroke="#B0B0B0" stroke-width="0.8"/><path d="M3 15.5 L6.5 8 H15.5 V15.5 Z" fill="#FFFFFF" stroke="#208A20" stroke-width="1.2"/><rect x="8" y="9.5" width="5" height="2.6" rx="1.2" fill="url(#gcoin)"/><rect x="8" y="12.1" width="5" height="2.6" rx="1.2" fill="url(#gcoin)"/></svg>
<svg style="left:527px;top:73px" width="18" height="17" viewBox="0 0 18 17"><path d="M0 1 H8 L10 0 V3 L8 4 H0 Z" fill="#4020E0"/><rect x="8" y="0" width="2" height="4" fill="#101850"/><path d="M1.5 2.5 H7" stroke="#F0E000" stroke-width="1.1" stroke-dasharray="1.1 1.1"/><path d="M4 4 L8 7 L9 5 L10 11 L4 10.5 L6 9 L3 5.5 Z" fill="#A8E020" stroke="#1A6010" stroke-width="0.7"/><path d="M5 13 H13 L15 12 V15 L13 16 H5 Z" fill="#F09050"/><rect x="13" y="12" width="2" height="4" fill="#101850"/><path d="M6.5 14.5 H12" stroke="#FFFFFF" stroke-width="1.1" stroke-dasharray="1.1 1.1"/></svg>
<svg style="left:550px;top:73px" width="17" height="17" viewBox="0 0 17 17"><path d="M0.5 0.5 H9.5 L11.5 2.5 V11.5 H0.5 Z" fill="#FFFFFF" stroke="#3A96D0"/><path d="M2 6.6000000000000005 H10 M2 8.64 H10" stroke="#18C0F0" stroke-width="0.9"/><path d="M4 4 Q7 1.5 9.5 5.5" fill="none" stroke="#1A3A6A" stroke-width="1.1"/><path d="M8 5 L9.5 7.5 L11 5" fill="none" stroke="#1A3A6A" stroke-width="1.1"/><rect x="6.5" y="9.0" width="6" height="2.6" rx="1.2" fill="url(#gcoin)"/><rect x="6.5" y="11.6" width="6" height="2.6" rx="1.2" fill="url(#gcoin)"/></svg>
<svg style="left:573px;top:73px" width="17" height="17" viewBox="0 0 17 17"><path d="M4.5 0.5 H13.5 L15.5 2.5 V12.5 H4.5 Z" fill="#FFFFFF" stroke="#3A96D0"/><path d="M6 7.15 H14 M6 9.36 H14" stroke="#18C0F0" stroke-width="0.9"/><rect x="0" y="0.0" width="6" height="2.6" rx="1.2" fill="url(#gcoin)"/><rect x="0" y="2.6" width="6" height="2.6" rx="1.2" fill="url(#gcoin)"/><path d="M3 8 Q3 13 9 12.5" fill="none" stroke="#1A3A6A" stroke-width="1.1"/><path d="M1.5 9 L3 7 L4.5 9" fill="none" stroke="#1A3A6A" stroke-width="1.1"/></svg>
<svg style="left:596px;top:73px" width="17" height="17" viewBox="0 0 17 17"><path d="M3 15.5 L7 11 V4 H13.5 V15.5 Z" fill="#A8A8A8"/><rect x="0" y="4" width="9" height="3" fill="#10C010"/><rect x="3" y="1" width="3" height="9" fill="#10C010"/><rect x="8" y="6.0" width="6" height="2.6" rx="1.2" fill="url(#gcoin)"/><rect x="8" y="8.6" width="6" height="2.6" rx="1.2" fill="url(#gcoin)"/><rect x="8" y="11.2" width="6" height="2.6" rx="1.2" fill="url(#gcoin)"/><rect x="8" y="13.8" width="6" height="2.6" rx="1.2" fill="url(#gcoin)"/></svg>
<svg style="left:619px;top:73px" width="17" height="17" viewBox="0 0 17 17"><path d="M3 15.5 L7 11 V4 H13.5 V15.5 Z" fill="#A8A8A8"/><rect x="0" y="3" width="9" height="2.5" fill="#10C010"/><rect x="8" y="6.0" width="6" height="2.6" rx="1.2" fill="url(#gcoin)"/><rect x="8" y="8.6" width="6" height="2.6" rx="1.2" fill="url(#gcoin)"/><rect x="8" y="11.2" width="6" height="2.6" rx="1.2" fill="url(#gcoin)"/><rect x="8" y="13.8" width="6" height="2.6" rx="1.2" fill="url(#gcoin)"/></svg>
<svg style="left:642px;top:73px" width="17" height="17" viewBox="0 0 17 17"><path d="M0.5 0.5 H8.5 L10.5 2.5 V12.5 H0.5 Z" fill="#FFFFFF" stroke="#3A96D0"/><path d="M2 7.15 H9 M2 9.36 H9" stroke="#18C0F0" stroke-width="0.9"/><path d="M6 8 L8.5 11 L14 5" fill="none" stroke="#10C020" stroke-width="2.2"/><rect x="0" y="11.0" width="6" height="2.6" rx="1.2" fill="url(#gcoin)"/><rect x="0" y="13.6" width="6" height="2.6" rx="1.2" fill="url(#gcoin)"/></svg>
<svg style="left:665px;top:73px" width="17" height="17" viewBox="0 0 17 17"><path d="M0.5 0.5 H8.5 L10.5 2.5 V12.5 H0.5 Z" fill="#FFFFFF" stroke="#3A96D0"/><path d="M2 7.15 H9 M2 9.36 H9" stroke="#18C0F0" stroke-width="0.9"/><rect x="3" y="4.0" width="6" height="2.6" rx="1.2" fill="url(#gcoin)"/><rect x="3" y="6.6" width="6" height="2.6" rx="1.2" fill="url(#gcoin)"/><rect x="3" y="9.2" width="6" height="2.6" rx="1.2" fill="url(#gcoin)"/><rect x="3" y="11.8" width="6" height="2.6" rx="1.2" fill="url(#gcoin)"/><rect x="3" y="14.4" width="6" height="2.6" rx="1.2" fill="url(#gcoin)"/><rect x="10" y="11.0" width="6" height="2.6" rx="1.2" fill="url(#gcoin)"/><rect x="10" y="13.6" width="6" height="2.6" rx="1.2" fill="url(#gcoin)"/></svg>
<svg style="left:688px;top:73px" width="17" height="17" viewBox="0 0 17 17"><path d="M0.5 0.5 H8.5 L10.5 2.5 V12.5 H0.5 Z" fill="#FFFFFF" stroke="#3A96D0"/><path d="M2 7.15 H9 M2 9.36 H9" stroke="#18C0F0" stroke-width="0.9"/><path d="M6 15 L13.5 6" stroke="#10A010" stroke-width="1.2"/><circle cx="7.5" cy="8.5" r="1.4" fill="#10A010"/><circle cx="12.5" cy="13.5" r="1.4" fill="#10A010"/></svg>
<svg style="left:711px;top:73px" width="17" height="17" viewBox="0 0 17 17"><path d="M0.5 0.5 H8.5 L10.5 2.5 V12.5 H0.5 Z" fill="#FFFFFF" stroke="#3A96D0"/><path d="M2 7.15 H9 M2 9.36 H9" stroke="#18C0F0" stroke-width="0.9"/><path d="M7 13 V10 Q7 8 9.5 8 H13.5 Q16 8 16 10 V13 Z" fill="url(#gred)"/><path d="M10 8 L11.5 10 L13 8 Z" fill="#F0F0F0"/><circle cx="11.5" cy="5.6" r="2.6" fill="#FFC8A0"/><path d="M8.7 6.2 A2.8 2.8 0 0 1 14.3 6.2 L13.8 5.2 Q11.5 4 9.2 5.2 Z" fill="#6A1A10"/><path d="M3 17 V14 Q3 12 5.5 12 H9.5 Q12 12 12 14 V17 Z" fill="url(#gblue)"/><path d="M6 12 L7.5 14 L9 12 Z" fill="#F0F0F0"/><circle cx="7.5" cy="9.6" r="2.6" fill="#FFC8A0"/><path d="M4.7 10.2 A2.8 2.8 0 0 1 10.3 10.2 L9.8 9.2 Q7.5 8 5.2 9.2 Z" fill="#6A1A10"/></svg>
<svg style="left:735px;top:73px" width="14" height="17" viewBox="0 0 14 17"><rect x="0.5" y="0.5" width="12" height="15" rx="2" fill="url(#gtree)" stroke="#1A6A1A"/><path d="M3.5 3.5 V12 H6 M3.5 7.5 H6" fill="none" stroke="#2A5A8A" stroke-width="0.8"/><rect x="2.5" y="2" width="2.5" height="2.5" fill="none" stroke="#2A5A8A" stroke-width="0.8"/><rect x="6" y="6.5" width="3.5" height="2.5" fill="none" stroke="#2A5A8A" stroke-width="0.8"/><rect x="6" y="11" width="3.5" height="2.5" fill="none" stroke="#2A5A8A" stroke-width="0.8"/></svg>
<svg style="left:756px;top:86px" width="7" height="4" viewBox="0 0 7 4"><path d="M0 0 H6.5 L3.25 3.2 Z" fill="#3A2E10"/></svg>
<div style="left:767px;top:70px;width:1px;height:1px;background:#C8BFA8"></div>
<div style="left:767px;top:90px;width:1px;height:1px;background:#C8BFA8"></div>
<div style="left:772px;top:73px;width:3px;height:1px;background:#BDB394"></div>
<div style="left:772px;top:75px;width:3px;height:1px;background:#BDB394"></div>
<div style="left:772px;top:77px;width:3px;height:1px;background:#BDB394"></div>
<div style="left:772px;top:79px;width:3px;height:1px;background:#BDB394"></div>
<div style="left:772px;top:81px;width:3px;height:1px;background:#BDB394"></div>
<div style="left:772px;top:83px;width:3px;height:1px;background:#BDB394"></div>
<div style="left:772px;top:85px;width:3px;height:1px;background:#BDB394"></div>
<div style="left:772px;top:87px;width:3px;height:1px;background:#BDB394"></div>
<svg style="left:781px;top:73px" width="18" height="17" viewBox="0 0 18 17"><path d="M0.5 0.5 H8 L10 2.5 V12.5 H0.5 Z" fill="#FFFFFF" stroke="#B8B8B8"/><rect x="0" y="12.5" width="10" height="1.2" fill="#505050"/><path d="M6.5 4 H2 L4.5 7 L2 10 H6.5" fill="none" stroke="#101010" stroke-width="1.1"/><path d="M7.5 11 V8 Q7.5 6 10.0 6 H14.0 Q16.5 6 16.5 8 V11 Z" fill="url(#gblue)"/><path d="M10.5 6 L12.0 8 L13.5 6 Z" fill="#F0F0F0"/><circle cx="12.0" cy="3.6" r="2.6" fill="#FFC8A0"/><path d="M9.2 4.2 A2.8 2.8 0 0 1 14.8 4.2 L14.3 3.2 Q12.0 2 9.7 3.2 Z" fill="#6A1A10"/><rect x="9" y="11" width="5" height="5" fill="#F01010"/><path d="M9 11 L10 10 H15 V15 L14 16 V11 Z" fill="#A00000"/></svg>
<svg style="left:804px;top:73px" width="18" height="17" viewBox="0 0 18 17"><path d="M0.5 0.5 H8 L10 2.5 V12.5 H0.5 Z" fill="#FFFFFF" stroke="#B8B8B8"/><rect x="0" y="12.5" width="10" height="1.2" fill="#505050"/><path d="M6.5 4 H2 L4.5 7 L2 10 H6.5" fill="none" stroke="#101010" stroke-width="1.1"/><path d="M7.5 11 V8 Q7.5 6 10.0 6 H14.0 Q16.5 6 16.5 8 V11 Z" fill="url(#gred)"/><path d="M10.5 6 L12.0 8 L13.5 6 Z" fill="#F0F0F0"/><circle cx="12.0" cy="3.6" r="2.6" fill="#FFC8A0"/><path d="M9.2 4.2 A2.8 2.8 0 0 1 14.8 4.2 L14.3 3.2 Q12.0 2 9.7 3.2 Z" fill="#6A1A10"/><rect x="9" y="11" width="5" height="5" fill="#1838F0"/><path d="M9 11 L10 10 H15 V15 L14 16 V11 Z" fill="#081070"/></svg>
<svg style="left:827px;top:73px" width="18" height="17" viewBox="0 0 18 17"><path d="M0.5 0.5 H8 L10 2.5 V12.5 H0.5 Z" fill="#FFFFFF" stroke="#B8B8B8"/><rect x="0" y="12.5" width="10" height="1.2" fill="#505050"/><path d="M6.5 4 H2 L4.5 7 L2 10 H6.5" fill="none" stroke="#101010" stroke-width="1.1"/><path d="M9 13 V10 Q9 8 11.5 8 H15.5 Q18 8 18 10 V13 Z" fill="url(#gblue)"/><path d="M12 8 L13.5 10 L15 8 Z" fill="#F0F0F0"/><circle cx="13.5" cy="5.6" r="2.6" fill="#FFC8A0"/><path d="M10.7 6.2 A2.8 2.8 0 0 1 16.3 6.2 L15.8 5.2 Q13.5 4 11.2 5.2 Z" fill="#6A1A10"/><path d="M4.5 17 V14 Q4.5 12 7.0 12 H11.0 Q13.5 12 13.5 14 V17 Z" fill="url(#gred)"/><path d="M7.5 12 L9.0 14 L10.5 12 Z" fill="#F0F0F0"/><circle cx="9.0" cy="9.6" r="2.6" fill="#FFC8A0"/><path d="M6.2 10.2 A2.8 2.8 0 0 1 11.8 10.2 L11.3 9.2 Q9.0 8 6.7 9.2 Z" fill="#6A1A10"/></svg>
<svg style="left:850px;top:73px" width="18" height="17" viewBox="0 0 18 17"><path d="M0.5 0.5 H8 L10 2.5 V12.5 H0.5 Z" fill="#FFFFFF" stroke="#B8B8B8"/><rect x="0" y="12.5" width="10" height="1.2" fill="#505050"/><path d="M6.5 4 H2 L4.5 7 L2 10 H6.5" fill="none" stroke="#101010" stroke-width="1.1"/><rect x="11" y="5" width="1" height="6" fill="#606060"/><rect x="11" y="2" width="5" height="5" fill="#F01010"/><path d="M11 2 L12 1 H17 V6 L16 7 V2 Z" fill="#A00000"/><path d="M6 13 H14 L16 12 V15 L14 16 H6 Z" fill="#2020C0"/><rect x="14" y="12" width="2" height="4" fill="#101850"/><path d="M7.5 14.5 H13" stroke="#F0E000" stroke-width="1.1" stroke-dasharray="1.1 1.1"/></svg>
<svg style="left:873px;top:73px" width="18" height="17" viewBox="0 0 18 17"><path d="M0.5 0.5 H8 L10 2.5 V12.5 H0.5 Z" fill="#FFFFFF" stroke="#B8B8B8"/><rect x="0" y="12.5" width="10" height="1.2" fill="#505050"/><path d="M6.5 4 H2 L4.5 7 L2 10 H6.5" fill="none" stroke="#101010" stroke-width="1.1"/><rect x="10.5" y="5" width="1" height="6" fill="#606060"/><rect x="10.5" y="1" width="5" height="5" fill="#F01010"/><path d="M10.5 1 L11.5 0 H16.5 V5 L15.5 6 V1 Z" fill="#A00000"/><rect x="8" y="11" width="6" height="4.5" fill="#F07818"/><rect x="9" y="12" width="3" height="2" fill="#803000"/></svg>
<svg style="left:896px;top:73px" width="18" height="17" viewBox="0 0 18 17"><path d="M0.5 0.5 H8 L10 2.5 V12.5 H0.5 Z" fill="#FFFFFF" stroke="#B8B8B8"/><rect x="0" y="12.5" width="10" height="1.2" fill="#505050"/><path d="M6.5 4 H2 L4.5 7 L2 10 H6.5" fill="none" stroke="#101010" stroke-width="1.1"/><rect x="10" y="4" width="5" height="5" fill="#F01010"/><path d="M10 4 L11 3 H16 V8 L15 9 V4 Z" fill="#A00000"/><path d="M6 12.5 H14 L16 11.5 V14.5 L14 15.5 H6 Z" fill="#1860F0"/><rect x="14" y="11.5" width="2" height="4" fill="#101850"/><path d="M7.5 14.0 H13" stroke="#FFFFFF" stroke-width="1.1" stroke-dasharray="1.1 1.1"/></svg>
<svg style="left:919px;top:73px" width="18" height="17" viewBox="0 0 18 17"><path d="M0.5 0.5 H8 L10 2.5 V12.5 H0.5 Z" fill="#FFFFFF" stroke="#B8B8B8"/><rect x="0" y="12.5" width="10" height="1.2" fill="#505050"/><path d="M6.5 4 H2 L4.5 7 L2 10 H6.5" fill="none" stroke="#101010" stroke-width="1.1"/><rect x="7.5" y="4" width="7" height="11" fill="#707070"/><path d="M8.5 6 H13.5 M8.5 8 H13.5 M8.5 10 H13.5 M8.5 12 H13.5" stroke="#F0F0F0" stroke-width="1"/><rect x="6.5" y="14.5" width="9" height="2" fill="#505050"/></svg>
<svg style="left:942px;top:73px" width="18" height="17" viewBox="0 0 18 17"><path d="M0.5 0.5 H8 L10 2.5 V12.5 H0.5 Z" fill="#FFFFFF" stroke="#B8B8B8"/><rect x="0" y="12.5" width="10" height="1.2" fill="#505050"/><path d="M6.5 4 H2 L4.5 7 L2 10 H6.5" fill="none" stroke="#101010" stroke-width="1.1"/><path d="M7 8.5 L9.5 11.5 L15 5.5" fill="none" stroke="#10C020" stroke-width="2.2"/></svg>
<svg style="left:964px;top:86px" width="7" height="4" viewBox="0 0 7 4"><path d="M0 0 H6.5 L3.25 3.2 Z" fill="#3A2E10"/></svg>
<div style="left:975px;top:70px;width:1px;height:1px;background:#C8BFA8"></div>
<div style="left:975px;top:90px;width:1px;height:1px;background:#C8BFA8"></div>
<div style="left:1px;top:100px;width:3px;height:1px;background:#BDB394"></div>
<div style="left:1px;top:102px;width:3px;height:1px;background:#BDB394"></div>
<div style="left:1px;top:104px;width:3px;height:1px;background:#BDB394"></div>
<div style="left:1px;top:106px;width:3px;height:1px;background:#BDB394"></div>
<div style="left:1px;top:108px;width:3px;height:1px;background:#BDB394"></div>
<div style="left:1px;top:110px;width:3px;height:1px;background:#BDB394"></div>
<div style="left:1px;top:112px;width:3px;height:1px;background:#BDB394"></div>
<svg style="left:10px;top:99px" width="17" height="17" viewBox="0 0 17 17"><path d="M1 15 L11 5" stroke="#B87A20" stroke-width="2.2"/><path d="M3 2 L14 14.5" stroke="#D8D8D8" stroke-width="2"/><path d="M3 2 L14 14.5" stroke="#707070" stroke-width="0.6"/><path d="M8.5 3 L12 0.5 L15.5 3.5 L14 6 L11 5.5 Z" fill="#606060"/><circle cx="3.2" cy="3.2" r="2.8" fill="none" stroke="#505050" stroke-width="1.3"/></svg>
<svg style="left:34px;top:99px" width="16" height="17" viewBox="0 0 16 17"><rect x="3.5" y="0.5" width="6" height="3" fill="#60A8E8" stroke="#3A78B0" stroke-width="0.6"/><path d="M6.5 3.5 V5" stroke="#3A78B0"/><rect x="3.5" y="5" width="6" height="3.5" rx="1" fill="#F8D0A0" stroke="#C89060" stroke-width="0.6"/><path d="M2.5 11 V7 H3.5 M9.5 7 H11 V9" fill="none" stroke="#909090" stroke-width="0.8"/><path d="M0 11 H6 L3 15 Z" fill="#2A5A8A"/><path d="M11 8.5 L14.5 12 L11 15.5 L7.5 12 Z" fill="#E04A30"/></svg>
<svg style="left:56px;top:99px" width="17" height="17" viewBox="0 0 17 17"><rect x="0.5" y="0.5" width="15" height="14" fill="#FFFFFF" stroke="#804A30"/><rect x="1" y="1" width="14" height="13" fill="#FFFFFF"/><rect x="7.5" y="1" width="1" height="13" fill="#808080"/><circle cx="8" cy="4" r="0.9" fill="#101010"/><circle cx="8" cy="11" r="0.9" fill="#101010"/><rect x="2" y="2.5" width="1" height="1" fill="#E02020"/><path d="M3.5 3.0 H7 M9 3.0 H13" stroke="#50C0D8" stroke-width="0.9" stroke-dasharray="1 1"/><rect x="2" y="4.5" width="1" height="1" fill="#5050A0"/><path d="M3.5 5.0 H7 M9 5.0 H13" stroke="#50C0D8" stroke-width="0.9" stroke-dasharray="1 1"/><rect x="2" y="6.5" width="1" height="1" fill="#5050A0"/><path d="M3.5 7.0 H7 M9 7.0 H13" stroke="#50C0D8" stroke-width="0.9" stroke-dasharray="1 1"/><rect x="2" y="8.5" width="1" height="1" fill="#E02020"/><path d="M3.5 9.0 H7 M9 9.0 H13" stroke="#50C0D8" stroke-width="0.9" stroke-dasharray="1 1"/><rect x="2" y="10.5" width="1" height="1" fill="#5050A0"/><path d="M3.5 11.0 H7 M9 11.0 H13" stroke="#50C0D8" stroke-width="0.9" stroke-dasharray="1 1"/><rect x="14" y="1" width="2" height="3" fill="#20D020"/><rect x="14" y="4" width="2" height="3" fill="#F06020"/><rect x="14" y="7" width="2" height="3" fill="#4060E0"/><rect x="14" y="10" width="2" height="4" fill="#F0E020"/></svg>
<svg style="left:79px;top:99px" width="17" height="17" viewBox="0 0 17 17"><rect x="0.5" y="0.5" width="15" height="15" fill="#FFFFFF" stroke="#B07A40"/><rect x="0.5" y="0.5" width="15" height="1" fill="#F8C040"/><rect x="6" y="2" width="4" height="1" fill="#606060"/><rect x="2" y="5" width="1.2" height="1.2" fill="#3A8AE0"/><rect x="2" y="7" width="1.2" height="1.2" fill="#3A8AE0"/><rect x="2" y="9" width="1.2" height="1.2" fill="#3A8AE0"/><rect x="2" y="11" width="1.2" height="1.2" fill="#3A8AE0"/><rect x="4" y="5" width="1.2" height="1.2" fill="#3A8AE0"/><rect x="4" y="7" width="1.2" height="1.2" fill="#3A8AE0"/><rect x="4" y="9" width="1.2" height="1.2" fill="#3A8AE0"/><rect x="4" y="11" width="1.2" height="1.2" fill="#3A8AE0"/><rect x="6" y="5" width="1.2" height="1.2" fill="#3A8AE0"/><rect x="6" y="7" width="1.2" height="1.2" fill="#3A8AE0"/><rect x="6" y="9" width="1.2" height="1.2" fill="#3A8AE0"/><rect x="6" y="11" width="1.2" height="1.2" fill="#3A8AE0"/><rect x="8" y="5" width="1.2" height="1.2" fill="#3A8AE0"/><rect x="8" y="7" width="1.2" height="1.2" fill="#3A8AE0"/><rect x="8" y="9" width="1.2" height="1.2" fill="#3A8AE0"/><rect x="8" y="11" width="1.2" height="1.2" fill="#3A8AE0"/><rect x="10.5" y="5" width="1.2" height="1.2" fill="#E04020"/><rect x="10.5" y="7" width="1.2" height="1.2" fill="#E04020"/><rect x="10.5" y="9" width="1.2" height="1.2" fill="#E04020"/><rect x="10.5" y="11" width="1.2" height="1.2" fill="#E04020"/><rect x="12.5" y="5" width="1.2" height="1.2" fill="#E04020"/><rect x="12.5" y="7" width="1.2" height="1.2" fill="#E04020"/><rect x="12.5" y="9" width="1.2" height="1.2" fill="#E04020"/><rect x="12.5" y="11" width="1.2" height="1.2" fill="#E04020"/><rect x="2" y="13" width="1.2" height="1.2" fill="#3A8AE0"/><rect x="4" y="13" width="1.2" height="1.2" fill="#3A8AE0"/><rect x="6" y="13" width="1.2" height="1.2" fill="#3A8AE0"/></svg>
<svg style="left:101px;top:112px" width="7" height="4" viewBox="0 0 7 4"><path d="M0 0 H6.5 L3.25 3.2 Z" fill="#3A2E10"/></svg>
<div style="left:112px;top:96px;width:1px;height:1px;background:#C8BFA8"></div>
<div style="left:112px;top:117px;width:1px;height:1px;background:#C8BFA8"></div>
<div style="left:0px;top:120px;width:1749px;height:2px;background:#6B6B6B"></div>
<div style="left:0px;top:122px;width:1749px;height:1px;background:#FFFFFF"></div>
<div style="left:0px;top:123px;width:1749px;height:17px;background:#CACACA"></div>
<div style="left:0px;top:123px;width:1px;height:17px;background:#FFFFFF"></div>
<div style="left:0px;top:140px;width:1749px;height:1px;background:#6E6E6E"></div>
<svg style="left:2px;top:123px" width="14" height="16" viewBox="0 0 14 16"><path d="M1.5 0.5 H9 L12.5 4 V14.5 H1.5 Z" fill="#FFFFFF" stroke="#6A8AA6"/><path d="M9 0.5 V4 H12.5" fill="#D8E4EE" stroke="#8AA2B8" stroke-width="0.8"/><path d="M3.8 2.5 V10" stroke="#505050" stroke-width="0.8"/><rect x="5.3" y="4" width="1.6" height="6" fill="#E82020"/><rect x="8.3" y="5" width="1.6" height="5" fill="#20A020"/><path d="M3.5 10.2 H11" stroke="#606060" stroke-width="0.8"/><path d="M3.5 12 H11" stroke="#80C8E8" stroke-width="0.8"/></svg>
<span class="t" style="transform:scaleX(1.0127);left:21px;top:125.44px;font-size:12px;color:#231C0C;font-weight:700;">Отчет  План поставок и оплат</span>
<div style="left:0px;top:141px;width:1749px;height:606px;background:#FEFAEF"></div>
<div style="left:8px;top:148px;width:1741px;height:117px;background:#ADA685"></div>
<div style="left:9px;top:149px;width:1740px;height:20px;background:#F3F0DE"></div>
<div style="left:9px;top:170px;width:1740px;height:18px;background:#FFFFFF"></div>
<div style="left:9px;top:189px;width:1740px;height:18px;background:#FFFFFF"></div>
<div style="left:9px;top:208px;width:1740px;height:18px;background:#FFFFFF"></div>
<div style="left:9px;top:227px;width:1740px;height:18px;background:#FFFFFF"></div>
<div style="left:9px;top:246px;width:1740px;height:18px;background:#FFFFFF"></div>
<div style="left:29px;top:149px;width:1px;height:115px;background:#ADA685"></div>
<div style="left:324px;top:149px;width:1px;height:115px;background:#ADA685"></div>
<div style="left:542px;top:149px;width:1px;height:115px;background:#ADA685"></div>
<span class="t" style="transform:scaleX(0.9053);left:33.5px;top:153.14px;font-size:12px;color:#3A2F14;font-weight:400;">Поле</span>
<span class="t" style="transform:scaleX(0.9124);left:329px;top:153.14px;font-size:12px;color:#3A2F14;font-weight:400;">Тип сравнения</span>
<span class="t" style="transform:scaleX(0.8756);left:547.3px;top:153.14px;font-size:12px;color:#3A2F14;font-weight:400;">Значение</span>
<div style="left:13px;top:172px;width:13px;height:13px;background:#ADA685"></div>
<div style="left:14px;top:173px;width:11px;height:11px;background:#FFFFFF"></div>
<span class="t" style="transform:scaleX(0.9727);left:33.5px;top:174.24px;font-size:12px;color:#000;font-weight:400;">Дата заказа</span>
<span class="t" style="transform:scaleX(0.8808);left:329px;top:174.24px;font-size:12px;color:#000;font-weight:400;">Интервал (&gt;=, &lt;=)</span>
<div style="left:13px;top:191px;width:13px;height:13px;background:#ADA685"></div>
<div style="left:14px;top:192px;width:11px;height:11px;background:#FFFFFF"></div>
<span class="t" style="transform:scaleX(0.9392);left:33.5px;top:193.24px;font-size:12px;color:#000;font-weight:400;">Заказ покупателя</span>
<span class="t" style="transform:scaleX(0.9360);left:329px;top:193.24px;font-size:12px;color:#000;font-weight:400;">В списке</span>
<div style="left:13px;top:210px;width:13px;height:13px;background:#ADA685"></div>
<div style="left:14px;top:211px;width:11px;height:11px;background:#FFFFFF"></div>
<svg style="left:14px;top:211px" width="11" height="11" viewBox="0 0 11 11"><path d="M2.2 5.2 L4.6 8.2 L9 2.6" stroke="#000" stroke-width="2.2" fill="none"/></svg>
<span class="t" style="transform:scaleX(0.9365);left:33.5px;top:212.24px;font-size:12px;color:#000;font-weight:400;">Комментарий заказа</span>
<span class="t" style="transform:scaleX(0.8984);left:329px;top:212.24px;font-size:12px;color:#000;font-weight:400;">Содержит</span>
<span class="t" style="transform:scaleX(0.8686);left:547.3px;top:212.24px;font-size:12px;color:#000;font-weight:400;">AW21</span>
<div style="left:13px;top:229px;width:13px;height:13px;background:#ADA685"></div>
<div style="left:14px;top:230px;width:11px;height:11px;background:#FFFFFF"></div>
<span class="t" style="transform:scaleX(0.9348);left:33.5px;top:231.24px;font-size:12px;color:#000;font-weight:400;">Контрагент</span>
<span class="t" style="transform:scaleX(0.9360);left:329px;top:231.24px;font-size:12px;color:#000;font-weight:400;">В списке</span>
<div style="left:13px;top:248px;width:13px;height:13px;background:#ADA685"></div>
<div style="left:14px;top:249px;width:11px;height:11px;background:#FFFFFF"></div>
<span class="t" style="transform:scaleX(0.9127);left:33.5px;top:250.24px;font-size:12px;color:#000;font-weight:400;">Номенклатура</span>
<span class="t" style="transform:scaleX(0.9360);left:329px;top:250.24px;font-size:12px;color:#000;font-weight:400;">В списке</span>
<div style="left:543px;top:170px;width:673px;height:18px;background:#5066C0"></div>
<span class="t" style="transform:scaleX(0.8510);left:8.6px;top:276.64px;font-size:12px;color:#2E2612;font-weight:400;">План ( xls файл )</span>
<div style="left:95px;top:273px;width:1443px;height:19px;background:#ADA685"></div>
<div style="left:96px;top:274px;width:1426px;height:17px;background:#FFFFFF"></div>
<div style="left:1523px;top:274px;width:14px;height:17px;background:#ECE6DA"></div>
<div style="left:1526px;top:285px;width:2px;height:2px;background:#7A6A40"></div>
<div style="left:1529px;top:285px;width:2px;height:2px;background:#7A6A40"></div>
<div style="left:1532px;top:285px;width:2px;height:2px;background:#7A6A40"></div>
<div style="left:1542px;top:276px;width:13px;height:13px;border:1px solid #A69C78;border-radius:3px;background:#FFFFFF"></div>
<span class="t" style="transform:scaleX(0.9193);left:1556.8px;top:276.14px;font-size:12px;color:#1E1A10;font-weight:400;">С картинками</span>
<span class="t" style="transform:scaleX(0.9029);left:1720.8px;top:275.64px;font-size:12px;color:#1E1A10;font-weight:400;">Сообщ</span>
<div style="left:15px;top:301px;width:380px;height:15px;background:#FBF7EC"></div>
<svg style="left:16px;top:304px" width="10" height="11" viewBox="0 0 10 11"><defs><linearGradient id="pg" x1="0" y1="0" x2="0" y2="1"><stop offset="0" stop-color="#7CC84A"/><stop offset="1" stop-color="#2E8A1E"/></linearGradient></defs><path d="M0.5 0.5 L9.5 5.5 L0.5 10.5 Z" fill="url(#pg)" stroke="#3A5A2A" stroke-width="0.6"/></svg>
<span class="t" style="transform:scaleX(0.9626);left:29.9px;top:304.04px;font-size:12px;color:#2A1E08;font-weight:700;">Сформировать</span>
<div style="left:124px;top:301px;width:1px;height:17px;background:#CFC6AC"></div>
<div style="left:125px;top:301px;width:1px;height:17px;background:#FFFFFF"></div>
<svg style="left:131px;top:301px" width="16" height="17" viewBox="0 0 16 17"><rect x="0.8" y="0.8" width="12.2" height="12.8" rx="1.5" fill="#FFFFFF" stroke="#9AAAB8" stroke-width="1.3"/><path d="M2.5 3 H5.5 M2.5 7.5 H4.5 M2.5 9.5 H6 M2.5 11.5 H8" stroke="#A8B4C0" stroke-width="0.9"/><path d="M4 4.3 L8.5 9" stroke="#5AA0E0" stroke-width="1.6" stroke-linecap="round"/><path d="M8.5 9 L14 14.5" stroke="#7A4A20" stroke-width="1.6" stroke-linecap="round"/><circle cx="8.5" cy="3.4" r="1.1" fill="#F04848"/><circle cx="13.5" cy="3.4" r="1.1" fill="#F04848"/><circle cx="11.5" cy="6.4" r="1.1" fill="#F04848"/></svg>
<span class="t" style="transform:scaleX(0.9254);left:149.5px;top:304.04px;font-size:12px;color:#2E2612;font-weight:400;">Конструктор настроек...</span>
<div style="left:278px;top:301px;width:1px;height:17px;background:#CFC6AC"></div>
<div style="left:279px;top:301px;width:1px;height:17px;background:#FFFFFF"></div>
<span class="t" style="transform:scaleX(0.9224);left:286px;top:304.04px;font-size:12px;color:#2E2612;font-weight:400;">Настройки...</span>
<div style="left:356px;top:301px;width:1px;height:17px;background:#CFC6AC"></div>
<div style="left:357px;top:301px;width:1px;height:17px;background:#FFFFFF"></div>
<svg style="left:362px;top:301px" width="16" height="17" viewBox="0 0 16 17"><rect x="4.5" y="0.5" width="9.5" height="12" rx="0.8" fill="#DCE0E4" stroke="#B8C0C8"/><path d="M6 2.5 H12.5 M6 4.5 H12.5 M6 6.5 H12.5 M6 8.5 H12.5" stroke="#B0BCC8" stroke-width="1"/><path d="M0.5 13 V6 H7 L5 8 Q7 10.5 10 10.5 L9 12 Q5.5 12 3.5 10 Z" fill="#A8B4A0"/><path d="M6.5 15.5 L11 10.5 L15.5 15.5 Z" fill="#C8C4B4"/></svg>
<svg style="left:386px;top:301px" width="16" height="17" viewBox="0 0 16 17"><rect x="3.5" y="0.5" width="9.5" height="10" rx="0.8" fill="#F8FAFC" stroke="#8AA2B8"/><path d="M5 2.5 H11.5 M5 4.5 H11.5 M5 6.5 H10 M5 8.5 H9" stroke="#A0B0C0" stroke-width="1"/><path d="M0.5 15.5 L5.5 10 L10.5 15.5 Z" fill="#F0C840" stroke="#C89A20" stroke-width="0.6"/><path d="M9 12.5 V6 L11 8.5 Q13 6 14.5 3 Q15 8 12.5 10.5 L15 12.5 Z" fill="#2A9A2A"/></svg>
<div style="left:8px;top:321px;width:1741px;height:1px;background:#C9C0A0"></div>
<div style="left:8px;top:324px;width:1741px;height:1px;background:#C4B888"></div>
<div style="left:8px;top:324px;width:1px;height:423px;background:#C4B888"></div>
<div style="left:50px;top:325px;width:1px;height:422px;background:#D4C792"></div>
<div style="left:51px;top:325px;width:1698px;height:50px;background:#F3EBC9"></div>
<div style="left:51px;top:375px;width:1698px;height:1px;background:#D4C792"></div>
<div style="left:51px;top:341px;width:1698px;height:1px;background:#D4C792"></div>
<div style="left:51px;top:358px;width:351px;height:1px;background:#D4C792"></div>
<div style="left:402px;top:325px;width:1px;height:50px;background:#D4C792"></div>
<div style="left:604px;top:325px;width:1px;height:50px;background:#D4C792"></div>
<div style="left:796px;top:325px;width:1px;height:50px;background:#D4C792"></div>
<div style="left:1040px;top:325px;width:1px;height:50px;background:#D4C792"></div>
<div style="left:1305px;top:325px;width:1px;height:50px;background:#D4C792"></div>
<div style="left:1614px;top:325px;width:1px;height:50px;background:#D4C792"></div>
<div style="left:159px;top:325px;width:1px;height:16px;background:#D4C792"></div>
<div style="left:261px;top:325px;width:1px;height:16px;background:#D4C792"></div>
<div style="left:159px;top:359px;width:1px;height:16px;background:#D4C792"></div>
<div style="left:261px;top:359px;width:1px;height:16px;background:#D4C792"></div>
<div style="left:331px;top:359px;width:1px;height:16px;background:#D4C792"></div>
<div style="left:488px;top:342px;width:1px;height:33px;background:#D4C792"></div>
<div style="left:690px;top:342px;width:1px;height:33px;background:#D4C792"></div>
<div style="left:882px;top:342px;width:1px;height:33px;background:#D4C792"></div>
<div style="left:981px;top:342px;width:1px;height:33px;background:#D4C792"></div>
<div style="left:1126px;top:342px;width:1px;height:33px;background:#D4C792"></div>
<div style="left:1232px;top:342px;width:1px;height:33px;background:#D4C792"></div>
<div style="left:1391px;top:342px;width:1px;height:33px;background:#D4C792"></div>
<div style="left:1449px;top:342px;width:1px;height:33px;background:#D4C792"></div>
<div style="left:1495px;top:342px;width:1px;height:33px;background:#D4C792"></div>
<div style="left:1555px;top:342px;width:1px;height:33px;background:#D4C792"></div>
<div style="left:1700px;top:342px;width:1px;height:33px;background:#D4C792"></div>
<span class="t" style="transform:scaleX(0.8979);left:54.3px;top:326.43px;font-size:14px;color:#16120A;font-weight:400;">Контрагент</span>
<span class="t" style="transform:scaleX(0.9729);left:163.3px;top:326.43px;font-size:14px;color:#16120A;font-weight:400;">Ранг</span>
<span class="t" style="transform:scaleX(0.9292);left:265.3px;top:326.43px;font-size:14px;color:#16120A;font-weight:400;">Дней отсрочки</span>
<span class="t" style="transform:scaleX(0.9120);left:406.3px;top:326.43px;font-size:14px;color:#16120A;font-weight:400;">Заказ</span>
<span class="t" style="transform:scaleX(0.9174);left:608.3px;top:326.43px;font-size:14px;color:#16120A;font-weight:400;">Отгружено</span>
<span class="t" style="transform:scaleX(0.9265);left:800.3px;top:326.43px;font-size:14px;color:#16120A;font-weight:400;">В резерве</span>
<span class="t" style="transform:scaleX(0.9370);left:1044.3px;top:326.43px;font-size:14px;color:#16120A;font-weight:400;">К отгрузке</span>
<span class="t" style="transform:scaleX(0.9037);left:1309.3px;top:326.43px;font-size:14px;color:#16120A;font-weight:400;">План</span>
<span class="t" style="transform:scaleX(0.8716);left:1618.3px;top:326.43px;font-size:14px;color:#16120A;font-weight:400;">Дефицит</span>
<span class="t" style="transform:scaleX(0.9150);left:54.3px;top:343.13px;font-size:14px;color:#16120A;font-weight:400;">Заказ покупателя</span>
<span class="t" style="transform:scaleX(0.9176);left:54.3px;top:359.43px;font-size:14px;color:#16120A;font-weight:400;">Артикул</span>
<span class="t" style="transform:scaleX(0.8983);left:163.3px;top:359.43px;font-size:14px;color:#16120A;font-weight:400;">Номенклатура</span>
<span class="t" style="transform:scaleX(0.9351);left:265.3px;top:359.43px;font-size:14px;color:#16120A;font-weight:400;">Размер</span>
<span class="t" style="transform:scaleX(0.9025);left:335.3px;top:359.43px;font-size:14px;color:#16120A;font-weight:400;">Картинка</span>
<span class="t" style="transform:scaleX(0.9124);left:406.3px;top:342.93px;font-size:14px;color:#16120A;font-weight:400;">Количество</span>
<span class="t" style="transform:scaleX(0.9250);left:492.3px;top:342.93px;font-size:14px;color:#16120A;font-weight:400;">Сумма</span>
<span class="t" style="transform:scaleX(0.9124);left:608.3px;top:342.93px;font-size:14px;color:#16120A;font-weight:400;">Количество</span>
<span class="t" style="transform:scaleX(0.9250);left:694.3px;top:342.93px;font-size:14px;color:#16120A;font-weight:400;">Сумма</span>
<span class="t" style="transform:scaleX(0.9124);left:800.3px;top:342.93px;font-size:14px;color:#16120A;font-weight:400;">Количество</span>
<span class="t" style="transform:scaleX(0.9250);left:886.3px;top:342.93px;font-size:14px;color:#16120A;font-weight:400;">Сумма</span>
<span class="t" style="transform:scaleX(0.9124);left:985.3px;top:342.93px;font-size:14px;color:#16120A;font-weight:400;">Дата</span>
<span class="t" style="transform:scaleX(0.8842);left:985.3px;top:359.03px;font-size:14px;color:#16120A;font-weight:400;">оплаты</span>
<span class="t" style="transform:scaleX(0.9124);left:1044.3px;top:342.93px;font-size:14px;color:#16120A;font-weight:400;">Количество</span>
<span class="t" style="transform:scaleX(0.9250);left:1130.3px;top:342.93px;font-size:14px;color:#16120A;font-weight:400;">Сумма</span>
<span class="t" style="transform:scaleX(0.9423);left:1236.3px;top:342.93px;font-size:14px;color:#16120A;font-weight:400;">В заявках</span>
<span class="t" style="transform:scaleX(0.9323);left:1236.3px;top:359.03px;font-size:14px;color:#16120A;font-weight:400;">на сборку</span>
<span class="t" style="transform:scaleX(0.9217);left:1309.3px;top:342.93px;font-size:14px;color:#16120A;font-weight:400;">Количество</span>
<span class="t" style="transform:scaleX(0.9318);left:1395.3px;top:342.93px;font-size:14px;color:#16120A;font-weight:400;">Сумма</span>
<span class="t" style="transform:scaleX(0.8868);left:1395.3px;top:359.03px;font-size:14px;color:#16120A;font-weight:400;">(план)</span>
<span class="t" style="transform:scaleX(0.9157);left:1453.3px;top:342.93px;font-size:14px;color:#16120A;font-weight:400;">Дата</span>
<span class="t" style="transform:scaleX(0.9429);left:1453.3px;top:359.03px;font-size:14px;color:#16120A;font-weight:400;">на ЦС</span>
<span class="t" style="transform:scaleX(0.9262);left:1499.3px;top:342.93px;font-size:14px;color:#16120A;font-weight:400;">Дата на</span>
<span class="t" style="transform:scaleX(0.9423);left:1499.3px;top:359.03px;font-size:14px;color:#16120A;font-weight:400;">ЦС + 10</span>
<span class="t" style="transform:scaleX(0.9157);left:1559.3px;top:342.93px;font-size:14px;color:#16120A;font-weight:400;">Дата</span>
<span class="t" style="transform:scaleX(0.8800);left:1559.3px;top:359.03px;font-size:14px;color:#16120A;font-weight:400;">оплаты</span>
<span class="t" style="transform:scaleX(0.9257);left:1618.3px;top:342.93px;font-size:14px;color:#16120A;font-weight:400;">Количество</span>
<span class="t" style="transform:scaleX(0.9364);left:1704.3px;top:342.93px;font-size:14px;color:#16120A;font-weight:400;">Сумма</span>
<div style="left:51px;top:376px;width:1698px;height:14px;background:#F7F0D9"></div>
<div style="left:51px;top:390px;width:1698px;height:1px;background:#D4C792"></div>
<div style="left:159px;top:376px;width:1px;height:14px;background:#D4C792"></div>
<div style="left:261px;top:376px;width:1px;height:14px;background:#D4C792"></div>
<div style="left:402px;top:376px;width:1px;height:14px;background:#D4C792"></div>
<div style="left:488px;top:376px;width:1px;height:14px;background:#D4C792"></div>
<div style="left:604px;top:376px;width:1px;height:14px;background:#D4C792"></div>
<div style="left:690px;top:376px;width:1px;height:14px;background:#D4C792"></div>
<div style="left:796px;top:376px;width:1px;height:14px;background:#D4C792"></div>
<div style="left:882px;top:376px;width:1px;height:14px;background:#D4C792"></div>
<div style="left:981px;top:376px;width:1px;height:14px;background:#D4C792"></div>
<div style="left:1040px;top:376px;width:1px;height:14px;background:#D4C792"></div>
<div style="left:1126px;top:376px;width:1px;height:14px;background:#D4C792"></div>
<div style="left:1232px;top:376px;width:1px;height:14px;background:#D4C792"></div>
<div style="left:1305px;top:376px;width:1px;height:14px;background:#D4C792"></div>
<div style="left:1391px;top:376px;width:1px;height:14px;background:#D4C792"></div>
<div style="left:1449px;top:376px;width:1px;height:14px;background:#D4C792"></div>
<div style="left:1495px;top:376px;width:1px;height:14px;background:#D4C792"></div>
<div style="left:1555px;top:376px;width:1px;height:14px;background:#D4C792"></div>
<div style="left:1614px;top:376px;width:1px;height:14px;background:#D4C792"></div>
<div style="left:1700px;top:376px;width:1px;height:14px;background:#D4C792"></div>
<span class="t" style="left:52.8px;top:378.15px;font-size:11px;color:#000;font-weight:400;transform:scaleX(0.99)">Бренд Стрит ООО</span>
<span class="t r" style="right:1356.5px;top:378.15px;font-size:11px;color:#000;font-weight:400;transform:scaleX(0.958)">90</span>
<span class="t r" style="right:1270.5px;top:378.15px;font-size:11px;color:#000;font-weight:400;transform:scaleX(0.958)">183,000</span>
<span class="t r" style="right:1154.5px;top:378.15px;font-size:11px;color:#000;font-weight:400;transform:scaleX(0.958)">1 798 850,00</span>
<span class="t r" style="right:632.5px;top:378.15px;font-size:11px;color:#000;font-weight:400;transform:scaleX(0.958)">183,000</span>
<span class="t r" style="right:526.5px;top:378.15px;font-size:11px;color:#000;font-weight:400;transform:scaleX(0.958)">1 798 850,00</span>
<div style="left:12px;top:378px;width:11px;height:11px;border:1px solid #B2AA88;border-radius:1px;background:linear-gradient(#FFFFFF,#EEEADC)"></div>
<div style="left:14px;top:383px;width:7px;height:1px;background:#2A2410"></div>
<div style="left:51px;top:391px;width:1698px;height:14px;background:#FBF7EB"></div>
<div style="left:51px;top:405px;width:1698px;height:1px;background:#D4C792"></div>
<div style="left:402px;top:391px;width:1px;height:14px;background:#D4C792"></div>
<div style="left:488px;top:391px;width:1px;height:14px;background:#D4C792"></div>
<div style="left:604px;top:391px;width:1px;height:14px;background:#D4C792"></div>
<div style="left:690px;top:391px;width:1px;height:14px;background:#D4C792"></div>
<div style="left:796px;top:391px;width:1px;height:14px;background:#D4C792"></div>
<div style="left:882px;top:391px;width:1px;height:14px;background:#D4C792"></div>
<div style="left:981px;top:391px;width:1px;height:14px;background:#D4C792"></div>
<div style="left:1040px;top:391px;width:1px;height:14px;background:#D4C792"></div>
<div style="left:1126px;top:391px;width:1px;height:14px;background:#D4C792"></div>
<div style="left:1232px;top:391px;width:1px;height:14px;background:#D4C792"></div>
<div style="left:1305px;top:391px;width:1px;height:14px;background:#D4C792"></div>
<div style="left:1391px;top:391px;width:1px;height:14px;background:#D4C792"></div>
<div style="left:1449px;top:391px;width:1px;height:14px;background:#D4C792"></div>
<div style="left:1495px;top:391px;width:1px;height:14px;background:#D4C792"></div>
<div style="left:1555px;top:391px;width:1px;height:14px;background:#D4C792"></div>
<div style="left:1614px;top:391px;width:1px;height:14px;background:#D4C792"></div>
<div style="left:1700px;top:391px;width:1px;height:14px;background:#D4C792"></div>
<span class="t" style="left:67px;top:393.15px;font-size:11px;color:#000;font-weight:400;transform:scaleX(0.995)">Заказ покупателя УТ000001050 от 11.12.2020 17:33:54</span>
<span class="t r" style="right:1270.5px;top:393.15px;font-size:11px;color:#000;font-weight:400;transform:scaleX(0.958)">60,000</span>
<span class="t r" style="right:1154.5px;top:393.15px;font-size:11px;color:#000;font-weight:400;transform:scaleX(0.958)">579 000,00</span>
<span class="t r" style="right:632.5px;top:393.15px;font-size:11px;color:#000;font-weight:400;transform:scaleX(0.958)">60,000</span>
<span class="t r" style="right:526.5px;top:393.15px;font-size:11px;color:#000;font-weight:400;transform:scaleX(0.958)">579 000,00</span>
<div style="left:25px;top:393px;width:11px;height:11px;border:1px solid #B2AA88;border-radius:1px;background:linear-gradient(#FFFFFF,#EEEADC)"></div>
<div style="left:27px;top:398px;width:7px;height:1px;background:#2A2410"></div>
<div style="left:30px;top:395px;width:1px;height:7px;background:#2A2410"></div>
<div style="left:51px;top:406px;width:1698px;height:14px;background:#FBF7EB"></div>
<div style="left:51px;top:420px;width:1698px;height:1px;background:#D4C792"></div>
<div style="left:402px;top:406px;width:1px;height:14px;background:#D4C792"></div>
<div style="left:488px;top:406px;width:1px;height:14px;background:#D4C792"></div>
<div style="left:604px;top:406px;width:1px;height:14px;background:#D4C792"></div>
<div style="left:690px;top:406px;width:1px;height:14px;background:#D4C792"></div>
<div style="left:796px;top:406px;width:1px;height:14px;background:#D4C792"></div>
<div style="left:882px;top:406px;width:1px;height:14px;background:#D4C792"></div>
<div style="left:981px;top:406px;width:1px;height:14px;background:#D4C792"></div>
<div style="left:1040px;top:406px;width:1px;height:14px;background:#D4C792"></div>
<div style="left:1126px;top:406px;width:1px;height:14px;background:#D4C792"></div>
<div style="left:1232px;top:406px;width:1px;height:14px;background:#D4C792"></div>
<div style="left:1305px;top:406px;width:1px;height:14px;background:#D4C792"></div>
<div style="left:1391px;top:406px;width:1px;height:14px;background:#D4C792"></div>
<div style="left:1449px;top:406px;width:1px;height:14px;background:#D4C792"></div>
<div style="left:1495px;top:406px;width:1px;height:14px;background:#D4C792"></div>
<div style="left:1555px;top:406px;width:1px;height:14px;background:#D4C792"></div>
<div style="left:1614px;top:406px;width:1px;height:14px;background:#D4C792"></div>
<div style="left:1700px;top:406px;width:1px;height:14px;background:#D4C792"></div>
<span class="t" style="left:67px;top:408.15px;font-size:11px;color:#000;font-weight:400;transform:scaleX(0.995)">Заказ покупателя УТ000000130 от 27.01.2021 13:57:37</span>
<span class="t r" style="right:1270.5px;top:408.15px;font-size:11px;color:#000;font-weight:400;transform:scaleX(0.958)">123,000</span>
<span class="t r" style="right:1154.5px;top:408.15px;font-size:11px;color:#000;font-weight:400;transform:scaleX(0.958)">1 219 850,00</span>
<span class="t r" style="right:632.5px;top:408.15px;font-size:11px;color:#000;font-weight:400;transform:scaleX(0.958)">123,000</span>
<span class="t r" style="right:526.5px;top:408.15px;font-size:11px;color:#000;font-weight:400;transform:scaleX(0.958)">1 219 850,00</span>
<div style="left:25px;top:408px;width:11px;height:11px;border:1px solid #B2AA88;border-radius:1px;background:linear-gradient(#FFFFFF,#EEEADC)"></div>
<div style="left:27px;top:413px;width:7px;height:1px;background:#2A2410"></div>
<div style="left:30px;top:410px;width:1px;height:7px;background:#2A2410"></div>
<div style="left:51px;top:421px;width:1698px;height:14px;background:#F7F0D9"></div>
<div style="left:51px;top:435px;width:1698px;height:1px;background:#D4C792"></div>
<div style="left:159px;top:421px;width:1px;height:14px;background:#D4C792"></div>
<div style="left:261px;top:421px;width:1px;height:14px;background:#D4C792"></div>
<div style="left:402px;top:421px;width:1px;height:14px;background:#D4C792"></div>
<div style="left:488px;top:421px;width:1px;height:14px;background:#D4C792"></div>
<div style="left:604px;top:421px;width:1px;height:14px;background:#D4C792"></div>
<div style="left:690px;top:421px;width:1px;height:14px;background:#D4C792"></div>
<div style="left:796px;top:421px;width:1px;height:14px;background:#D4C792"></div>
<div style="left:882px;top:421px;width:1px;height:14px;background:#D4C792"></div>
<div style="left:981px;top:421px;width:1px;height:14px;background:#D4C792"></div>
<div style="left:1040px;top:421px;width:1px;height:14px;background:#D4C792"></div>
<div style="left:1126px;top:421px;width:1px;height:14px;background:#D4C792"></div>
<div style="left:1232px;top:421px;width:1px;height:14px;background:#D4C792"></div>
<div style="left:1305px;top:421px;width:1px;height:14px;background:#D4C792"></div>
<div style="left:1391px;top:421px;width:1px;height:14px;background:#D4C792"></div>
<div style="left:1449px;top:421px;width:1px;height:14px;background:#D4C792"></div>
<div style="left:1495px;top:421px;width:1px;height:14px;background:#D4C792"></div>
<div style="left:1555px;top:421px;width:1px;height:14px;background:#D4C792"></div>
<div style="left:1614px;top:421px;width:1px;height:14px;background:#D4C792"></div>
<div style="left:1700px;top:421px;width:1px;height:14px;background:#D4C792"></div>
<span class="t" style="left:52.8px;top:423.15px;font-size:11px;color:#000;font-weight:400;transform:scaleX(0.99)">Брента ООО</span>
<span class="t r" style="right:1497.5px;top:423.15px;font-size:11px;color:#000;font-weight:400;transform:scaleX(0.958)">202</span>
<span class="t r" style="right:1270.5px;top:423.15px;font-size:11px;color:#000;font-weight:400;transform:scaleX(0.958)">48,000</span>
<span class="t r" style="right:1154.5px;top:423.15px;font-size:11px;color:#000;font-weight:400;transform:scaleX(0.958)">481 320,00</span>
<span class="t r" style="right:876.5px;top:423.15px;font-size:11px;color:#000;font-weight:400;transform:scaleX(0.958)">8,000</span>
<span class="t r" style="right:777.5px;top:423.15px;font-size:11px;color:#000;font-weight:400;transform:scaleX(0.958)">79 200,00</span>
<span class="t r" style="right:632.5px;top:423.15px;font-size:11px;color:#000;font-weight:400;transform:scaleX(0.958)">40,000</span>
<span class="t r" style="right:526.5px;top:423.15px;font-size:11px;color:#000;font-weight:400;transform:scaleX(0.958)">402 120,00</span>
<span class="t r" style="right:453.5px;top:423.15px;font-size:11px;color:#000;font-weight:400;transform:scaleX(0.958)">8</span>
<div style="left:12px;top:423px;width:11px;height:11px;border:1px solid #B2AA88;border-radius:1px;background:linear-gradient(#FFFFFF,#EEEADC)"></div>
<div style="left:14px;top:428px;width:7px;height:1px;background:#2A2410"></div>
<div style="left:17px;top:425px;width:1px;height:7px;background:#2A2410"></div>
<div style="left:51px;top:436px;width:1698px;height:14px;background:#F7F0D9"></div>
<div style="left:51px;top:450px;width:1698px;height:1px;background:#D4C792"></div>
<div style="left:159px;top:436px;width:1px;height:14px;background:#D4C792"></div>
<div style="left:261px;top:436px;width:1px;height:14px;background:#D4C792"></div>
<div style="left:402px;top:436px;width:1px;height:14px;background:#D4C792"></div>
<div style="left:488px;top:436px;width:1px;height:14px;background:#D4C792"></div>
<div style="left:604px;top:436px;width:1px;height:14px;background:#D4C792"></div>
<div style="left:690px;top:436px;width:1px;height:14px;background:#D4C792"></div>
<div style="left:796px;top:436px;width:1px;height:14px;background:#D4C792"></div>
<div style="left:882px;top:436px;width:1px;height:14px;background:#D4C792"></div>
<div style="left:981px;top:436px;width:1px;height:14px;background:#D4C792"></div>
<div style="left:1040px;top:436px;width:1px;height:14px;background:#D4C792"></div>
<div style="left:1126px;top:436px;width:1px;height:14px;background:#D4C792"></div>
<div style="left:1232px;top:436px;width:1px;height:14px;background:#D4C792"></div>
<div style="left:1305px;top:436px;width:1px;height:14px;background:#D4C792"></div>
<div style="left:1391px;top:436px;width:1px;height:14px;background:#D4C792"></div>
<div style="left:1449px;top:436px;width:1px;height:14px;background:#D4C792"></div>
<div style="left:1495px;top:436px;width:1px;height:14px;background:#D4C792"></div>
<div style="left:1555px;top:436px;width:1px;height:14px;background:#D4C792"></div>
<div style="left:1614px;top:436px;width:1px;height:14px;background:#D4C792"></div>
<div style="left:1700px;top:436px;width:1px;height:14px;background:#D4C792"></div>
<span class="t" style="left:52.8px;top:438.15px;font-size:11px;color:#000;font-weight:400;transform:scaleX(0.99)">Брикс ООО</span>
<span class="t r" style="right:1497.5px;top:438.15px;font-size:11px;color:#000;font-weight:400;transform:scaleX(0.958)">6</span>
<span class="t r" style="right:1356.5px;top:438.15px;font-size:11px;color:#000;font-weight:400;transform:scaleX(0.958)">30</span>
<span class="t r" style="right:1270.5px;top:438.15px;font-size:11px;color:#000;font-weight:400;transform:scaleX(0.958)">84,000</span>
<span class="t r" style="right:1154.5px;top:438.15px;font-size:11px;color:#000;font-weight:400;transform:scaleX(0.958)">955 100,00</span>
<span class="t r" style="right:1068.5px;top:438.15px;font-size:11px;color:#000;font-weight:400;transform:scaleX(0.958)">22,000</span>
<span class="t r" style="right:962.5px;top:438.15px;font-size:11px;color:#000;font-weight:400;transform:scaleX(0.958)">242 000,00</span>
<span class="t r" style="right:632.5px;top:438.15px;font-size:11px;color:#000;font-weight:400;transform:scaleX(0.958)">62,000</span>
<span class="t r" style="right:526.5px;top:438.15px;font-size:11px;color:#000;font-weight:400;transform:scaleX(0.958)">713 100,00</span>
<div style="left:12px;top:438px;width:11px;height:11px;border:1px solid #B2AA88;border-radius:1px;background:linear-gradient(#FFFFFF,#EEEADC)"></div>
<div style="left:14px;top:443px;width:7px;height:1px;background:#2A2410"></div>
<div style="left:17px;top:440px;width:1px;height:7px;background:#2A2410"></div>
<div style="left:51px;top:451px;width:1698px;height:28px;background:#F7F0D9"></div>
<div style="left:51px;top:479px;width:1698px;height:1px;background:#D4C792"></div>
<div style="left:159px;top:451px;width:1px;height:28px;background:#D4C792"></div>
<div style="left:261px;top:451px;width:1px;height:28px;background:#D4C792"></div>
<div style="left:402px;top:451px;width:1px;height:28px;background:#D4C792"></div>
<div style="left:488px;top:451px;width:1px;height:28px;background:#D4C792"></div>
<div style="left:604px;top:451px;width:1px;height:28px;background:#D4C792"></div>
<div style="left:690px;top:451px;width:1px;height:28px;background:#D4C792"></div>
<div style="left:796px;top:451px;width:1px;height:28px;background:#D4C792"></div>
<div style="left:882px;top:451px;width:1px;height:28px;background:#D4C792"></div>
<div style="left:981px;top:451px;width:1px;height:28px;background:#D4C792"></div>
<div style="left:1040px;top:451px;width:1px;height:28px;background:#D4C792"></div>
<div style="left:1126px;top:451px;width:1px;height:28px;background:#D4C792"></div>
<div style="left:1232px;top:451px;width:1px;height:28px;background:#D4C792"></div>
<div style="left:1305px;top:451px;width:1px;height:28px;background:#D4C792"></div>
<div style="left:1391px;top:451px;width:1px;height:28px;background:#D4C792"></div>
<div style="left:1449px;top:451px;width:1px;height:28px;background:#D4C792"></div>
<div style="left:1495px;top:451px;width:1px;height:28px;background:#D4C792"></div>
<div style="left:1555px;top:451px;width:1px;height:28px;background:#D4C792"></div>
<div style="left:1614px;top:451px;width:1px;height:28px;background:#D4C792"></div>
<div style="left:1700px;top:451px;width:1px;height:28px;background:#D4C792"></div>
<span class="t" style="left:52.8px;top:453.15px;font-size:11px;color:#000;font-weight:400;transform:scaleX(0.99)">Бубновый валет</span>
<span class="t" style="left:52.8px;top:467.15px;font-size:11px;color:#000;font-weight:400;transform:scaleX(0.99)">ООО</span>
<span class="t r" style="right:1497.5px;top:453.15px;font-size:11px;color:#000;font-weight:400;transform:scaleX(0.958)">31</span>
<span class="t r" style="right:1270.5px;top:453.15px;font-size:11px;color:#000;font-weight:400;transform:scaleX(0.958)">74,000</span>
<span class="t r" style="right:1154.5px;top:453.15px;font-size:11px;color:#000;font-weight:400;transform:scaleX(0.958)">781 300,00</span>
<span class="t r" style="right:876.5px;top:453.15px;font-size:11px;color:#000;font-weight:400;transform:scaleX(0.958)">2,000</span>
<span class="t r" style="right:777.5px;top:453.15px;font-size:11px;color:#000;font-weight:400;transform:scaleX(0.958)">22 900,00</span>
<span class="t r" style="right:632.5px;top:453.15px;font-size:11px;color:#000;font-weight:400;transform:scaleX(0.958)">72,000</span>
<span class="t r" style="right:526.5px;top:453.15px;font-size:11px;color:#000;font-weight:400;transform:scaleX(0.958)">758 400,00</span>
<div style="left:12px;top:460px;width:11px;height:11px;border:1px solid #B2AA88;border-radius:1px;background:linear-gradient(#FFFFFF,#EEEADC)"></div>
<div style="left:14px;top:465px;width:7px;height:1px;background:#2A2410"></div>
<div style="left:17px;top:462px;width:1px;height:7px;background:#2A2410"></div>
<div style="left:51px;top:480px;width:1698px;height:14px;background:#F7F0D9"></div>
<div style="left:51px;top:494px;width:1698px;height:1px;background:#D4C792"></div>
<div style="left:159px;top:480px;width:1px;height:14px;background:#D4C792"></div>
<div style="left:261px;top:480px;width:1px;height:14px;background:#D4C792"></div>
<div style="left:402px;top:480px;width:1px;height:14px;background:#D4C792"></div>
<div style="left:488px;top:480px;width:1px;height:14px;background:#D4C792"></div>
<div style="left:604px;top:480px;width:1px;height:14px;background:#D4C792"></div>
<div style="left:690px;top:480px;width:1px;height:14px;background:#D4C792"></div>
<div style="left:796px;top:480px;width:1px;height:14px;background:#D4C792"></div>
<div style="left:882px;top:480px;width:1px;height:14px;background:#D4C792"></div>
<div style="left:981px;top:480px;width:1px;height:14px;background:#D4C792"></div>
<div style="left:1040px;top:480px;width:1px;height:14px;background:#D4C792"></div>
<div style="left:1126px;top:480px;width:1px;height:14px;background:#D4C792"></div>
<div style="left:1232px;top:480px;width:1px;height:14px;background:#D4C792"></div>
<div style="left:1305px;top:480px;width:1px;height:14px;background:#D4C792"></div>
<div style="left:1391px;top:480px;width:1px;height:14px;background:#D4C792"></div>
<div style="left:1449px;top:480px;width:1px;height:14px;background:#D4C792"></div>
<div style="left:1495px;top:480px;width:1px;height:14px;background:#D4C792"></div>
<div style="left:1555px;top:480px;width:1px;height:14px;background:#D4C792"></div>
<div style="left:1614px;top:480px;width:1px;height:14px;background:#D4C792"></div>
<div style="left:1700px;top:480px;width:1px;height:14px;background:#D4C792"></div>
<span class="t" style="left:52.8px;top:482.15px;font-size:11px;color:#000;font-weight:400;transform:scaleX(0.99)">БШ Стор ООО</span>
<span class="t r" style="right:1497.5px;top:482.15px;font-size:11px;color:#000;font-weight:400;transform:scaleX(0.958)">6</span>
<span class="t r" style="right:1270.5px;top:482.15px;font-size:11px;color:#000;font-weight:400;transform:scaleX(0.958)">1 023,000</span>
<span class="t r" style="right:1154.5px;top:482.15px;font-size:11px;color:#000;font-weight:400;transform:scaleX(0.958)">8 624 115,00</span>
<span class="t r" style="right:1068.5px;top:482.15px;font-size:11px;color:#000;font-weight:400;transform:scaleX(0.958)">402,000</span>
<span class="t r" style="right:962.5px;top:482.15px;font-size:11px;color:#000;font-weight:400;transform:scaleX(0.958)">3 186 360,00</span>
<span class="t r" style="right:632.5px;top:482.15px;font-size:11px;color:#000;font-weight:400;transform:scaleX(0.958)">621,000</span>
<span class="t r" style="right:526.5px;top:482.15px;font-size:11px;color:#000;font-weight:400;transform:scaleX(0.958)">5 437 755,00</span>
<div style="left:12px;top:482px;width:11px;height:11px;border:1px solid #B2AA88;border-radius:1px;background:linear-gradient(#FFFFFF,#EEEADC)"></div>
<div style="left:14px;top:487px;width:7px;height:1px;background:#2A2410"></div>
<div style="left:17px;top:484px;width:1px;height:7px;background:#2A2410"></div>
<div style="left:51px;top:495px;width:1698px;height:14px;background:#F7F0D9"></div>
<div style="left:51px;top:509px;width:1698px;height:1px;background:#D4C792"></div>
<div style="left:159px;top:495px;width:1px;height:14px;background:#D4C792"></div>
<div style="left:261px;top:495px;width:1px;height:14px;background:#D4C792"></div>
<div style="left:402px;top:495px;width:1px;height:14px;background:#D4C792"></div>
<div style="left:488px;top:495px;width:1px;height:14px;background:#D4C792"></div>
<div style="left:604px;top:495px;width:1px;height:14px;background:#D4C792"></div>
<div style="left:690px;top:495px;width:1px;height:14px;background:#D4C792"></div>
<div style="left:796px;top:495px;width:1px;height:14px;background:#D4C792"></div>
<div style="left:882px;top:495px;width:1px;height:14px;background:#D4C792"></div>
<div style="left:981px;top:495px;width:1px;height:14px;background:#D4C792"></div>
<div style="left:1040px;top:495px;width:1px;height:14px;background:#D4C792"></div>
<div style="left:1126px;top:495px;width:1px;height:14px;background:#D4C792"></div>
<div style="left:1232px;top:495px;width:1px;height:14px;background:#D4C792"></div>
<div style="left:1305px;top:495px;width:1px;height:14px;background:#D4C792"></div>
<div style="left:1391px;top:495px;width:1px;height:14px;background:#D4C792"></div>
<div style="left:1449px;top:495px;width:1px;height:14px;background:#D4C792"></div>
<div style="left:1495px;top:495px;width:1px;height:14px;background:#D4C792"></div>
<div style="left:1555px;top:495px;width:1px;height:14px;background:#D4C792"></div>
<div style="left:1614px;top:495px;width:1px;height:14px;background:#D4C792"></div>
<div style="left:1700px;top:495px;width:1px;height:14px;background:#D4C792"></div>
<span class="t" style="left:52.8px;top:497.15px;font-size:11px;color:#000;font-weight:400;transform:scaleX(0.99)">ИНТЕРМОДЕ ООО</span>
<span class="t r" style="right:1497.5px;top:497.15px;font-size:11px;color:#000;font-weight:400;transform:scaleX(0.958)">2</span>
<span class="t r" style="right:1270.5px;top:497.15px;font-size:11px;color:#000;font-weight:400;transform:scaleX(0.958)">10 062,000</span>
<span class="t r" style="right:1154.5px;top:497.15px;font-size:11px;color:#000;font-weight:400;transform:scaleX(0.958)">85 644 975,00</span>
<span class="t r" style="right:1068.5px;top:497.15px;font-size:11px;color:#000;font-weight:400;transform:scaleX(0.958)">6 029,000</span>
<span class="t r" style="right:962.5px;top:497.15px;font-size:11px;color:#000;font-weight:400;transform:scaleX(0.958)">50 551 915,50</span>
<span class="t r" style="right:632.5px;top:497.15px;font-size:11px;color:#000;font-weight:400;transform:scaleX(0.958)">4 033,000</span>
<span class="t r" style="right:526.5px;top:497.15px;font-size:11px;color:#000;font-weight:400;transform:scaleX(0.958)">35 093 059,50</span>
<span class="t r" style="right:453.5px;top:497.15px;font-size:11px;color:#000;font-weight:400;transform:scaleX(0.958)">3 108</span>
<div style="left:12px;top:497px;width:11px;height:11px;border:1px solid #B2AA88;border-radius:1px;background:linear-gradient(#FFFFFF,#EEEADC)"></div>
<div style="left:14px;top:502px;width:7px;height:1px;background:#2A2410"></div>
<div style="left:17px;top:499px;width:1px;height:7px;background:#2A2410"></div>
<div style="left:51px;top:510px;width:1698px;height:28px;background:#F7F0D9"></div>
<div style="left:51px;top:538px;width:1698px;height:1px;background:#D4C792"></div>
<div style="left:159px;top:510px;width:1px;height:28px;background:#D4C792"></div>
<div style="left:261px;top:510px;width:1px;height:28px;background:#D4C792"></div>
<div style="left:402px;top:510px;width:1px;height:28px;background:#D4C792"></div>
<div style="left:488px;top:510px;width:1px;height:28px;background:#D4C792"></div>
<div style="left:604px;top:510px;width:1px;height:28px;background:#D4C792"></div>
<div style="left:690px;top:510px;width:1px;height:28px;background:#D4C792"></div>
<div style="left:796px;top:510px;width:1px;height:28px;background:#D4C792"></div>
<div style="left:882px;top:510px;width:1px;height:28px;background:#D4C792"></div>
<div style="left:981px;top:510px;width:1px;height:28px;background:#D4C792"></div>
<div style="left:1040px;top:510px;width:1px;height:28px;background:#D4C792"></div>
<div style="left:1126px;top:510px;width:1px;height:28px;background:#D4C792"></div>
<div style="left:1232px;top:510px;width:1px;height:28px;background:#D4C792"></div>
<div style="left:1305px;top:510px;width:1px;height:28px;background:#D4C792"></div>
<div style="left:1391px;top:510px;width:1px;height:28px;background:#D4C792"></div>
<div style="left:1449px;top:510px;width:1px;height:28px;background:#D4C792"></div>
<div style="left:1495px;top:510px;width:1px;height:28px;background:#D4C792"></div>
<div style="left:1555px;top:510px;width:1px;height:28px;background:#D4C792"></div>
<div style="left:1614px;top:510px;width:1px;height:28px;background:#D4C792"></div>
<div style="left:1700px;top:510px;width:1px;height:28px;background:#D4C792"></div>
<span class="t" style="left:52.8px;top:512.14px;font-size:11px;color:#000;font-weight:400;transform:scaleX(0.99)">Интернет Решения</span>
<span class="t" style="left:52.8px;top:526.14px;font-size:11px;color:#000;font-weight:400;transform:scaleX(0.99)">ООО</span>
<span class="t r" style="right:1497.5px;top:512.14px;font-size:11px;color:#000;font-weight:400;transform:scaleX(0.958)">3</span>
<span class="t r" style="right:1356.5px;top:512.14px;font-size:11px;color:#000;font-weight:400;transform:scaleX(0.958)">65</span>
<span class="t r" style="right:1270.5px;top:512.14px;font-size:11px;color:#000;font-weight:400;transform:scaleX(0.958)">1 893,000</span>
<span class="t r" style="right:1154.5px;top:512.14px;font-size:11px;color:#000;font-weight:400;transform:scaleX(0.958)">16 876 204,00</span>
<span class="t r" style="right:1068.5px;top:512.14px;font-size:11px;color:#000;font-weight:400;transform:scaleX(0.958)">518,000</span>
<span class="t r" style="right:962.5px;top:512.14px;font-size:11px;color:#000;font-weight:400;transform:scaleX(0.958)">4 585 510,00</span>
<span class="t r" style="right:876.5px;top:512.14px;font-size:11px;color:#000;font-weight:400;transform:scaleX(0.958)">524,000</span>
<span class="t r" style="right:777.5px;top:512.14px;font-size:11px;color:#000;font-weight:400;transform:scaleX(0.958)">4 600 276,00</span>
<span class="t r" style="right:632.5px;top:512.14px;font-size:11px;color:#000;font-weight:400;transform:scaleX(0.958)">851,000</span>
<span class="t r" style="right:526.5px;top:512.14px;font-size:11px;color:#000;font-weight:400;transform:scaleX(0.958)">7 690 418,00</span>
<span class="t r" style="right:453.5px;top:512.14px;font-size:11px;color:#000;font-weight:400;transform:scaleX(0.958)">504</span>
<div style="left:12px;top:519px;width:11px;height:11px;border:1px solid #B2AA88;border-radius:1px;background:linear-gradient(#FFFFFF,#EEEADC)"></div>
<div style="left:14px;top:524px;width:7px;height:1px;background:#2A2410"></div>
<div style="left:17px;top:521px;width:1px;height:7px;background:#2A2410"></div>
<div style="left:51px;top:539px;width:1698px;height:14px;background:#F7F0D9"></div>
<div style="left:51px;top:553px;width:1698px;height:1px;background:#D4C792"></div>
<div style="left:159px;top:539px;width:1px;height:14px;background:#D4C792"></div>
<div style="left:261px;top:539px;width:1px;height:14px;background:#D4C792"></div>
<div style="left:402px;top:539px;width:1px;height:14px;background:#D4C792"></div>
<div style="left:488px;top:539px;width:1px;height:14px;background:#D4C792"></div>
<div style="left:604px;top:539px;width:1px;height:14px;background:#D4C792"></div>
<div style="left:690px;top:539px;width:1px;height:14px;background:#D4C792"></div>
<div style="left:796px;top:539px;width:1px;height:14px;background:#D4C792"></div>
<div style="left:882px;top:539px;width:1px;height:14px;background:#D4C792"></div>
<div style="left:981px;top:539px;width:1px;height:14px;background:#D4C792"></div>
<div style="left:1040px;top:539px;width:1px;height:14px;background:#D4C792"></div>
<div style="left:1126px;top:539px;width:1px;height:14px;background:#D4C792"></div>
<div style="left:1232px;top:539px;width:1px;height:14px;background:#D4C792"></div>
<div style="left:1305px;top:539px;width:1px;height:14px;background:#D4C792"></div>
<div style="left:1391px;top:539px;width:1px;height:14px;background:#D4C792"></div>
<div style="left:1449px;top:539px;width:1px;height:14px;background:#D4C792"></div>
<div style="left:1495px;top:539px;width:1px;height:14px;background:#D4C792"></div>
<div style="left:1555px;top:539px;width:1px;height:14px;background:#D4C792"></div>
<div style="left:1614px;top:539px;width:1px;height:14px;background:#D4C792"></div>
<div style="left:1700px;top:539px;width:1px;height:14px;background:#D4C792"></div>
<span class="t" style="left:52.8px;top:541.14px;font-size:11px;color:#000;font-weight:400;transform:scaleX(0.99)">Интерстеп ДВ ООО</span>
<span class="t r" style="right:1497.5px;top:541.14px;font-size:11px;color:#000;font-weight:400;transform:scaleX(0.958)">44</span>
<span class="t r" style="right:1270.5px;top:541.14px;font-size:11px;color:#000;font-weight:400;transform:scaleX(0.958)">144,000</span>
<span class="t r" style="right:1154.5px;top:541.14px;font-size:11px;color:#000;font-weight:400;transform:scaleX(0.958)">1 422 240,00</span>
<span class="t r" style="right:1068.5px;top:541.14px;font-size:11px;color:#000;font-weight:400;transform:scaleX(0.958)">37,000</span>
<span class="t r" style="right:962.5px;top:541.14px;font-size:11px;color:#000;font-weight:400;transform:scaleX(0.958)">365 424,00</span>
<span class="t r" style="right:632.5px;top:541.14px;font-size:11px;color:#000;font-weight:400;transform:scaleX(0.958)">107,000</span>
<span class="t r" style="right:526.5px;top:541.14px;font-size:11px;color:#000;font-weight:400;transform:scaleX(0.958)">1 056 816,00</span>
<div style="left:12px;top:541px;width:11px;height:11px;border:1px solid #B2AA88;border-radius:1px;background:linear-gradient(#FFFFFF,#EEEADC)"></div>
<div style="left:14px;top:546px;width:7px;height:1px;background:#2A2410"></div>
<div style="left:17px;top:543px;width:1px;height:7px;background:#2A2410"></div>
<div style="left:51px;top:554px;width:1698px;height:42px;background:#F7F0D9"></div>
<div style="left:51px;top:596px;width:1698px;height:1px;background:#D4C792"></div>
<div style="left:159px;top:554px;width:1px;height:42px;background:#D4C792"></div>
<div style="left:261px;top:554px;width:1px;height:42px;background:#D4C792"></div>
<div style="left:402px;top:554px;width:1px;height:42px;background:#D4C792"></div>
<div style="left:488px;top:554px;width:1px;height:42px;background:#D4C792"></div>
<div style="left:604px;top:554px;width:1px;height:42px;background:#D4C792"></div>
<div style="left:690px;top:554px;width:1px;height:42px;background:#D4C792"></div>
<div style="left:796px;top:554px;width:1px;height:42px;background:#D4C792"></div>
<div style="left:882px;top:554px;width:1px;height:42px;background:#D4C792"></div>
<div style="left:981px;top:554px;width:1px;height:42px;background:#D4C792"></div>
<div style="left:1040px;top:554px;width:1px;height:42px;background:#D4C792"></div>
<div style="left:1126px;top:554px;width:1px;height:42px;background:#D4C792"></div>
<div style="left:1232px;top:554px;width:1px;height:42px;background:#D4C792"></div>
<div style="left:1305px;top:554px;width:1px;height:42px;background:#D4C792"></div>
<div style="left:1391px;top:554px;width:1px;height:42px;background:#D4C792"></div>
<div style="left:1449px;top:554px;width:1px;height:42px;background:#D4C792"></div>
<div style="left:1495px;top:554px;width:1px;height:42px;background:#D4C792"></div>
<div style="left:1555px;top:554px;width:1px;height:42px;background:#D4C792"></div>
<div style="left:1614px;top:554px;width:1px;height:42px;background:#D4C792"></div>
<div style="left:1700px;top:554px;width:1px;height:42px;background:#D4C792"></div>
<span class="t" style="left:52.8px;top:556.14px;font-size:11px;color:#000;font-weight:400;transform:scaleX(0.99)">ИП Бабарскова</span>
<span class="t" style="left:52.8px;top:570.14px;font-size:11px;color:#000;font-weight:400;transform:scaleX(0.99)">Екатерина</span>
<span class="t" style="left:52.8px;top:584.14px;font-size:11px;color:#000;font-weight:400;transform:scaleX(0.99)">Николаевна</span>
<span class="t r" style="right:1497.5px;top:556.14px;font-size:11px;color:#000;font-weight:400;transform:scaleX(0.958)">8</span>
<span class="t r" style="right:1270.5px;top:556.14px;font-size:11px;color:#000;font-weight:400;transform:scaleX(0.958)">44,000</span>
<span class="t r" style="right:1154.5px;top:556.14px;font-size:11px;color:#000;font-weight:400;transform:scaleX(0.958)">441 430,00</span>
<span class="t r" style="right:1068.5px;top:556.14px;font-size:11px;color:#000;font-weight:400;transform:scaleX(0.958)">31,000</span>
<span class="t r" style="right:962.5px;top:556.14px;font-size:11px;color:#000;font-weight:400;transform:scaleX(0.958)">302 445,00</span>
<span class="t r" style="right:632.5px;top:556.14px;font-size:11px;color:#000;font-weight:400;transform:scaleX(0.958)">13,000</span>
<span class="t r" style="right:526.5px;top:556.14px;font-size:11px;color:#000;font-weight:400;transform:scaleX(0.958)">138 985,00</span>
<div style="left:12px;top:570px;width:11px;height:11px;border:1px solid #B2AA88;border-radius:1px;background:linear-gradient(#FFFFFF,#EEEADC)"></div>
<div style="left:14px;top:575px;width:7px;height:1px;background:#2A2410"></div>
<div style="left:17px;top:572px;width:1px;height:7px;background:#2A2410"></div>
<div style="left:51px;top:597px;width:1698px;height:28px;background:#F7F0D9"></div>
<div style="left:51px;top:625px;width:1698px;height:1px;background:#D4C792"></div>
<div style="left:159px;top:597px;width:1px;height:28px;background:#D4C792"></div>
<div style="left:261px;top:597px;width:1px;height:28px;background:#D4C792"></div>
<div style="left:402px;top:597px;width:1px;height:28px;background:#D4C792"></div>
<div style="left:488px;top:597px;width:1px;height:28px;background:#D4C792"></div>
<div style="left:604px;top:597px;width:1px;height:28px;background:#D4C792"></div>
<div style="left:690px;top:597px;width:1px;height:28px;background:#D4C792"></div>
<div style="left:796px;top:597px;width:1px;height:28px;background:#D4C792"></div>
<div style="left:882px;top:597px;width:1px;height:28px;background:#D4C792"></div>
<div style="left:981px;top:597px;width:1px;height:28px;background:#D4C792"></div>
<div style="left:1040px;top:597px;width:1px;height:28px;background:#D4C792"></div>
<div style="left:1126px;top:597px;width:1px;height:28px;background:#D4C792"></div>
<div style="left:1232px;top:597px;width:1px;height:28px;background:#D4C792"></div>
<div style="left:1305px;top:597px;width:1px;height:28px;background:#D4C792"></div>
<div style="left:1391px;top:597px;width:1px;height:28px;background:#D4C792"></div>
<div style="left:1449px;top:597px;width:1px;height:28px;background:#D4C792"></div>
<div style="left:1495px;top:597px;width:1px;height:28px;background:#D4C792"></div>
<div style="left:1555px;top:597px;width:1px;height:28px;background:#D4C792"></div>
<div style="left:1614px;top:597px;width:1px;height:28px;background:#D4C792"></div>
<div style="left:1700px;top:597px;width:1px;height:28px;background:#D4C792"></div>
<span class="t" style="left:52.8px;top:599.14px;font-size:11px;color:#000;font-weight:400;transform:scaleX(0.99)">ИП Блинов Олег</span>
<span class="t" style="left:52.8px;top:613.14px;font-size:11px;color:#000;font-weight:400;transform:scaleX(0.99)">Александрович</span>
<span class="t r" style="right:1270.5px;top:599.14px;font-size:11px;color:#000;font-weight:400;transform:scaleX(0.958)">141,000</span>
<span class="t r" style="right:1154.5px;top:599.14px;font-size:11px;color:#000;font-weight:400;transform:scaleX(0.958)">1 501 084,00</span>
<span class="t r" style="right:1068.5px;top:599.14px;font-size:11px;color:#000;font-weight:400;transform:scaleX(0.958)">12,000</span>
<span class="t r" style="right:962.5px;top:599.14px;font-size:11px;color:#000;font-weight:400;transform:scaleX(0.958)">117 936,00</span>
<span class="t r" style="right:876.5px;top:599.14px;font-size:11px;color:#000;font-weight:400;transform:scaleX(0.958)">29,000</span>
<span class="t r" style="right:777.5px;top:599.14px;font-size:11px;color:#000;font-weight:400;transform:scaleX(0.958)">315 276,00</span>
<span class="t r" style="right:632.5px;top:599.14px;font-size:11px;color:#000;font-weight:400;transform:scaleX(0.958)">100,000</span>
<span class="t r" style="right:526.5px;top:599.14px;font-size:11px;color:#000;font-weight:400;transform:scaleX(0.958)">1 067 872,00</span>
<span class="t r" style="right:453.5px;top:599.14px;font-size:11px;color:#000;font-weight:400;transform:scaleX(0.958)">18</span>
<div style="left:12px;top:606px;width:11px;height:11px;border:1px solid #B2AA88;border-radius:1px;background:linear-gradient(#FFFFFF,#EEEADC)"></div>
<div style="left:14px;top:611px;width:7px;height:1px;background:#2A2410"></div>
<div style="left:17px;top:608px;width:1px;height:7px;background:#2A2410"></div>
<div style="left:51px;top:626px;width:1698px;height:28px;background:#F7F0D9"></div>
<div style="left:51px;top:654px;width:1698px;height:1px;background:#D4C792"></div>
<div style="left:159px;top:626px;width:1px;height:28px;background:#D4C792"></div>
<div style="left:261px;top:626px;width:1px;height:28px;background:#D4C792"></div>
<div style="left:402px;top:626px;width:1px;height:28px;background:#D4C792"></div>
<div style="left:488px;top:626px;width:1px;height:28px;background:#D4C792"></div>
<div style="left:604px;top:626px;width:1px;height:28px;background:#D4C792"></div>
<div style="left:690px;top:626px;width:1px;height:28px;background:#D4C792"></div>
<div style="left:796px;top:626px;width:1px;height:28px;background:#D4C792"></div>
<div style="left:882px;top:626px;width:1px;height:28px;background:#D4C792"></div>
<div style="left:981px;top:626px;width:1px;height:28px;background:#D4C792"></div>
<div style="left:1040px;top:626px;width:1px;height:28px;background:#D4C792"></div>
<div style="left:1126px;top:626px;width:1px;height:28px;background:#D4C792"></div>
<div style="left:1232px;top:626px;width:1px;height:28px;background:#D4C792"></div>
<div style="left:1305px;top:626px;width:1px;height:28px;background:#D4C792"></div>
<div style="left:1391px;top:626px;width:1px;height:28px;background:#D4C792"></div>
<div style="left:1449px;top:626px;width:1px;height:28px;background:#D4C792"></div>
<div style="left:1495px;top:626px;width:1px;height:28px;background:#D4C792"></div>
<div style="left:1555px;top:626px;width:1px;height:28px;background:#D4C792"></div>
<div style="left:1614px;top:626px;width:1px;height:28px;background:#D4C792"></div>
<div style="left:1700px;top:626px;width:1px;height:28px;background:#D4C792"></div>
<span class="t" style="left:52.8px;top:628.14px;font-size:11px;color:#000;font-weight:400;transform:scaleX(0.99)">ИП Гагарин Никита</span>
<span class="t" style="left:52.8px;top:642.14px;font-size:11px;color:#000;font-weight:400;transform:scaleX(0.99)">Валерьевич</span>
<span class="t r" style="right:1497.5px;top:628.14px;font-size:11px;color:#000;font-weight:400;transform:scaleX(0.958)">41</span>
<span class="t r" style="right:1270.5px;top:628.14px;font-size:11px;color:#000;font-weight:400;transform:scaleX(0.958)">60,000</span>
<span class="t r" style="right:1154.5px;top:628.14px;font-size:11px;color:#000;font-weight:400;transform:scaleX(0.958)">642 180,00</span>
<span class="t r" style="right:1068.5px;top:628.14px;font-size:11px;color:#000;font-weight:400;transform:scaleX(0.958)">37,000</span>
<span class="t r" style="right:962.5px;top:628.14px;font-size:11px;color:#000;font-weight:400;transform:scaleX(0.958)">394 845,00</span>
<span class="t r" style="right:632.5px;top:628.14px;font-size:11px;color:#000;font-weight:400;transform:scaleX(0.958)">23,000</span>
<span class="t r" style="right:526.5px;top:628.14px;font-size:11px;color:#000;font-weight:400;transform:scaleX(0.958)">247 335,00</span>
<div style="left:12px;top:635px;width:11px;height:11px;border:1px solid #B2AA88;border-radius:1px;background:linear-gradient(#FFFFFF,#EEEADC)"></div>
<div style="left:14px;top:640px;width:7px;height:1px;background:#2A2410"></div>
<div style="left:17px;top:637px;width:1px;height:7px;background:#2A2410"></div>
<div style="left:51px;top:655px;width:1698px;height:28px;background:#F7F0D9"></div>
<div style="left:51px;top:683px;width:1698px;height:1px;background:#D4C792"></div>
<div style="left:159px;top:655px;width:1px;height:28px;background:#D4C792"></div>
<div style="left:261px;top:655px;width:1px;height:28px;background:#D4C792"></div>
<div style="left:402px;top:655px;width:1px;height:28px;background:#D4C792"></div>
<div style="left:488px;top:655px;width:1px;height:28px;background:#D4C792"></div>
<div style="left:604px;top:655px;width:1px;height:28px;background:#D4C792"></div>
<div style="left:690px;top:655px;width:1px;height:28px;background:#D4C792"></div>
<div style="left:796px;top:655px;width:1px;height:28px;background:#D4C792"></div>
<div style="left:882px;top:655px;width:1px;height:28px;background:#D4C792"></div>
<div style="left:981px;top:655px;width:1px;height:28px;background:#D4C792"></div>
<div style="left:1040px;top:655px;width:1px;height:28px;background:#D4C792"></div>
<div style="left:1126px;top:655px;width:1px;height:28px;background:#D4C792"></div>
<div style="left:1232px;top:655px;width:1px;height:28px;background:#D4C792"></div>
<div style="left:1305px;top:655px;width:1px;height:28px;background:#D4C792"></div>
<div style="left:1391px;top:655px;width:1px;height:28px;background:#D4C792"></div>
<div style="left:1449px;top:655px;width:1px;height:28px;background:#D4C792"></div>
<div style="left:1495px;top:655px;width:1px;height:28px;background:#D4C792"></div>
<div style="left:1555px;top:655px;width:1px;height:28px;background:#D4C792"></div>
<div style="left:1614px;top:655px;width:1px;height:28px;background:#D4C792"></div>
<div style="left:1700px;top:655px;width:1px;height:28px;background:#D4C792"></div>
<span class="t" style="left:52.8px;top:657.14px;font-size:11px;color:#000;font-weight:400;transform:scaleX(0.99)">ИП Зубова Татьяна</span>
<span class="t" style="left:52.8px;top:671.14px;font-size:11px;color:#000;font-weight:400;transform:scaleX(0.99)">Борисовна</span>
<span class="t r" style="right:1497.5px;top:657.14px;font-size:11px;color:#000;font-weight:400;transform:scaleX(0.958)">38</span>
<span class="t r" style="right:1270.5px;top:657.14px;font-size:11px;color:#000;font-weight:400;transform:scaleX(0.958)">60,000</span>
<span class="t r" style="right:1154.5px;top:657.14px;font-size:11px;color:#000;font-weight:400;transform:scaleX(0.958)">706 860,00</span>
<span class="t r" style="right:876.5px;top:657.14px;font-size:11px;color:#000;font-weight:400;transform:scaleX(0.958)">12,000</span>
<span class="t r" style="right:777.5px;top:657.14px;font-size:11px;color:#000;font-weight:400;transform:scaleX(0.958)">145 200,00</span>
<span class="t r" style="right:632.5px;top:657.14px;font-size:11px;color:#000;font-weight:400;transform:scaleX(0.958)">48,000</span>
<span class="t r" style="right:526.5px;top:657.14px;font-size:11px;color:#000;font-weight:400;transform:scaleX(0.958)">561 660,00</span>
<span class="t r" style="right:453.5px;top:657.14px;font-size:11px;color:#000;font-weight:400;transform:scaleX(0.958)">12</span>
<div style="left:12px;top:664px;width:11px;height:11px;border:1px solid #B2AA88;border-radius:1px;background:linear-gradient(#FFFFFF,#EEEADC)"></div>
<div style="left:14px;top:669px;width:7px;height:1px;background:#2A2410"></div>
<div style="left:17px;top:666px;width:1px;height:7px;background:#2A2410"></div>
<div style="left:51px;top:684px;width:1698px;height:28px;background:#F7F0D9"></div>
<div style="left:51px;top:712px;width:1698px;height:1px;background:#D4C792"></div>
<div style="left:159px;top:684px;width:1px;height:28px;background:#D4C792"></div>
<div style="left:261px;top:684px;width:1px;height:28px;background:#D4C792"></div>
<div style="left:402px;top:684px;width:1px;height:28px;background:#D4C792"></div>
<div style="left:488px;top:684px;width:1px;height:28px;background:#D4C792"></div>
<div style="left:604px;top:684px;width:1px;height:28px;background:#D4C792"></div>
<div style="left:690px;top:684px;width:1px;height:28px;background:#D4C792"></div>
<div style="left:796px;top:684px;width:1px;height:28px;background:#D4C792"></div>
<div style="left:882px;top:684px;width:1px;height:28px;background:#D4C792"></div>
<div style="left:981px;top:684px;width:1px;height:28px;background:#D4C792"></div>
<div style="left:1040px;top:684px;width:1px;height:28px;background:#D4C792"></div>
<div style="left:1126px;top:684px;width:1px;height:28px;background:#D4C792"></div>
<div style="left:1232px;top:684px;width:1px;height:28px;background:#D4C792"></div>
<div style="left:1305px;top:684px;width:1px;height:28px;background:#D4C792"></div>
<div style="left:1391px;top:684px;width:1px;height:28px;background:#D4C792"></div>
<div style="left:1449px;top:684px;width:1px;height:28px;background:#D4C792"></div>
<div style="left:1495px;top:684px;width:1px;height:28px;background:#D4C792"></div>
<div style="left:1555px;top:684px;width:1px;height:28px;background:#D4C792"></div>
<div style="left:1614px;top:684px;width:1px;height:28px;background:#D4C792"></div>
<div style="left:1700px;top:684px;width:1px;height:28px;background:#D4C792"></div>
<span class="t" style="left:52.8px;top:686.14px;font-size:11px;color:#000;font-weight:400;transform:scaleX(0.99)">ИП Косинов Денис</span>
<span class="t" style="left:52.8px;top:700.14px;font-size:11px;color:#000;font-weight:400;transform:scaleX(0.99)">Вадимович</span>
<span class="t r" style="right:1270.5px;top:686.14px;font-size:11px;color:#000;font-weight:400;transform:scaleX(0.958)">188,000</span>
<span class="t r" style="right:1154.5px;top:686.14px;font-size:11px;color:#000;font-weight:400;transform:scaleX(0.958)">2 037 256,00</span>
<span class="t r" style="right:1068.5px;top:686.14px;font-size:11px;color:#000;font-weight:400;transform:scaleX(0.958)">53,000</span>
<span class="t r" style="right:962.5px;top:686.14px;font-size:11px;color:#000;font-weight:400;transform:scaleX(0.958)">566 020,00</span>
<span class="t r" style="right:876.5px;top:686.14px;font-size:11px;color:#000;font-weight:400;transform:scaleX(0.958)">13,000</span>
<span class="t r" style="right:777.5px;top:686.14px;font-size:11px;color:#000;font-weight:400;transform:scaleX(0.958)">150 540,00</span>
<span class="t r" style="right:632.5px;top:686.14px;font-size:11px;color:#000;font-weight:400;transform:scaleX(0.958)">122,000</span>
<span class="t r" style="right:526.5px;top:686.14px;font-size:11px;color:#000;font-weight:400;transform:scaleX(0.958)">1 320 696,00</span>
<span class="t r" style="right:453.5px;top:686.14px;font-size:11px;color:#000;font-weight:400;transform:scaleX(0.958)">13</span>
<div style="left:12px;top:693px;width:11px;height:11px;border:1px solid #B2AA88;border-radius:1px;background:linear-gradient(#FFFFFF,#EEEADC)"></div>
<div style="left:14px;top:698px;width:7px;height:1px;background:#2A2410"></div>
<div style="left:17px;top:695px;width:1px;height:7px;background:#2A2410"></div>
<div style="left:51px;top:713px;width:1698px;height:28px;background:#F7F0D9"></div>
<div style="left:51px;top:741px;width:1698px;height:1px;background:#D4C792"></div>
<div style="left:159px;top:713px;width:1px;height:28px;background:#D4C792"></div>
<div style="left:261px;top:713px;width:1px;height:28px;background:#D4C792"></div>
<div style="left:402px;top:713px;width:1px;height:28px;background:#D4C792"></div>
<div style="left:488px;top:713px;width:1px;height:28px;background:#D4C792"></div>
<div style="left:604px;top:713px;width:1px;height:28px;background:#D4C792"></div>
<div style="left:690px;top:713px;width:1px;height:28px;background:#D4C792"></div>
<div style="left:796px;top:713px;width:1px;height:28px;background:#D4C792"></div>
<div style="left:882px;top:713px;width:1px;height:28px;background:#D4C792"></div>
<div style="left:981px;top:713px;width:1px;height:28px;background:#D4C792"></div>
<div style="left:1040px;top:713px;width:1px;height:28px;background:#D4C792"></div>
<div style="left:1126px;top:713px;width:1px;height:28px;background:#D4C792"></div>
<div style="left:1232px;top:713px;width:1px;height:28px;background:#D4C792"></div>
<div style="left:1305px;top:713px;width:1px;height:28px;background:#D4C792"></div>
<div style="left:1391px;top:713px;width:1px;height:28px;background:#D4C792"></div>
<div style="left:1449px;top:713px;width:1px;height:28px;background:#D4C792"></div>
<div style="left:1495px;top:713px;width:1px;height:28px;background:#D4C792"></div>
<div style="left:1555px;top:713px;width:1px;height:28px;background:#D4C792"></div>
<div style="left:1614px;top:713px;width:1px;height:28px;background:#D4C792"></div>
<div style="left:1700px;top:713px;width:1px;height:28px;background:#D4C792"></div>
<span class="t" style="left:52.8px;top:715.14px;font-size:11px;color:#000;font-weight:400;transform:scaleX(0.99)">ИП Лохова Юлия</span>
<span class="t" style="left:52.8px;top:729.14px;font-size:11px;color:#000;font-weight:400;transform:scaleX(0.99)">Сергеевна</span>
<span class="t r" style="right:1497.5px;top:715.14px;font-size:11px;color:#000;font-weight:400;transform:scaleX(0.958)">36</span>
<span class="t r" style="right:1270.5px;top:715.14px;font-size:11px;color:#000;font-weight:400;transform:scaleX(0.958)">145,000</span>
<span class="t r" style="right:1154.5px;top:715.14px;font-size:11px;color:#000;font-weight:400;transform:scaleX(0.958)">1 612 832,00</span>
<span class="t r" style="right:1068.5px;top:715.14px;font-size:11px;color:#000;font-weight:400;transform:scaleX(0.958)">53,000</span>
<span class="t r" style="right:962.5px;top:715.14px;font-size:11px;color:#000;font-weight:400;transform:scaleX(0.958)">554 736,00</span>
<span class="t r" style="right:876.5px;top:715.14px;font-size:11px;color:#000;font-weight:400;transform:scaleX(0.958)">6,000</span>
<span class="t r" style="right:777.5px;top:715.14px;font-size:11px;color:#000;font-weight:400;transform:scaleX(0.958)">68 328,00</span>
<span class="t r" style="right:632.5px;top:715.14px;font-size:11px;color:#000;font-weight:400;transform:scaleX(0.958)">86,000</span>
<span class="t r" style="right:526.5px;top:715.14px;font-size:11px;color:#000;font-weight:400;transform:scaleX(0.958)">989 768,00</span>
<div style="left:12px;top:722px;width:11px;height:11px;border:1px solid #B2AA88;border-radius:1px;background:linear-gradient(#FFFFFF,#EEEADC)"></div>
<div style="left:14px;top:727px;width:7px;height:1px;background:#2A2410"></div>
<div style="left:17px;top:724px;width:1px;height:7px;background:#2A2410"></div>
<div style="left:51px;top:742px;width:1698px;height:28px;background:#F7F0D9"></div>
<div style="left:51px;top:770px;width:1698px;height:1px;background:#D4C792"></div>
<div style="left:159px;top:742px;width:1px;height:28px;background:#D4C792"></div>
<div style="left:261px;top:742px;width:1px;height:28px;background:#D4C792"></div>
<div style="left:402px;top:742px;width:1px;height:28px;background:#D4C792"></div>
<div style="left:488px;top:742px;width:1px;height:28px;background:#D4C792"></div>
<div style="left:604px;top:742px;width:1px;height:28px;background:#D4C792"></div>
<div style="left:690px;top:742px;width:1px;height:28px;background:#D4C792"></div>
<div style="left:796px;top:742px;width:1px;height:28px;background:#D4C792"></div>
<div style="left:882px;top:742px;width:1px;height:28px;background:#D4C792"></div>
<div style="left:981px;top:742px;width:1px;height:28px;background:#D4C792"></div>
<div style="left:1040px;top:742px;width:1px;height:28px;background:#D4C792"></div>
<div style="left:1126px;top:742px;width:1px;height:28px;background:#D4C792"></div>
<div style="left:1232px;top:742px;width:1px;height:28px;background:#D4C792"></div>
<div style="left:1305px;top:742px;width:1px;height:28px;background:#D4C792"></div>
<div style="left:1391px;top:742px;width:1px;height:28px;background:#D4C792"></div>
<div style="left:1449px;top:742px;width:1px;height:28px;background:#D4C792"></div>
<div style="left:1495px;top:742px;width:1px;height:28px;background:#D4C792"></div>
<div style="left:1555px;top:742px;width:1px;height:28px;background:#D4C792"></div>
<div style="left:1614px;top:742px;width:1px;height:28px;background:#D4C792"></div>
<div style="left:1700px;top:742px;width:1px;height:28px;background:#D4C792"></div>
<span class="t" style="left:52.8px;top:744.14px;font-size:11px;color:#000;font-weight:400;transform:scaleX(0.99)">ИП Митин Сергей</span>
<span class="t" style="left:52.8px;top:758.14px;font-size:11px;color:#000;font-weight:400;transform:scaleX(0.99)">Олегович</span>
<span class="t r" style="right:1497.5px;top:744.14px;font-size:11px;color:#000;font-weight:400;transform:scaleX(0.958)">48</span>
<span class="t r" style="right:1356.5px;top:744.14px;font-size:11px;color:#000;font-weight:400;transform:scaleX(0.958)">25</span>
<span class="t r" style="right:1270.5px;top:744.14px;font-size:11px;color:#000;font-weight:400;transform:scaleX(0.958)">24,000</span>
<span class="t r" style="right:1154.5px;top:744.14px;font-size:11px;color:#000;font-weight:400;transform:scaleX(0.958)">218 880,00</span>
<span class="t r" style="right:1068.5px;top:744.14px;font-size:11px;color:#000;font-weight:400;transform:scaleX(0.958)">18,000</span>
<span class="t r" style="right:962.5px;top:744.14px;font-size:11px;color:#000;font-weight:400;transform:scaleX(0.958)">181 180,00</span>
<span class="t r" style="right:632.5px;top:744.14px;font-size:11px;color:#000;font-weight:400;transform:scaleX(0.958)">46,000</span>
<span class="t r" style="right:526.5px;top:744.14px;font-size:11px;color:#000;font-weight:400;transform:scaleX(0.958)">146 880,00</span>
<div style="left:12px;top:751px;width:11px;height:11px;border:1px solid #B2AA88;border-radius:1px;background:linear-gradient(#FFFFFF,#EEEADC)"></div>
<div style="left:14px;top:756px;width:7px;height:1px;background:#2A2410"></div>
<div style="left:17px;top:753px;width:1px;height:7px;background:#2A2410"></div>
<div style="left:17px;top:389px;width:1px;height:31px;background:#B8B090"></div>
<div style="left:17px;top:420px;width:4px;height:1px;background:#B8B090"></div>
<div style="left:1304px;top:493px;width:89px;height:18px;border:2px solid #0E1440;background:#2A3470"></div>
<div style="left:1306px;top:495px;width:85px;height:14px;border:1px solid #F6F0DC;background:#CDCED3"></div>
<div style="left:1749px;top:0px;width:1px;height:747px;background:#FFFFFF"></div>
<div style="left:1750px;top:0px;width:6px;height:747px;background:#CBCBCB"></div>
<div style="left:1750px;top:0px;width:6px;height:13px;background:#EFEFEF"></div>
<svg style="left:1752px;top:3px" width="4" height="6" viewBox="0 0 4 6"><path d="M0.5 5.5 L3.5 1.5 L4 1.5 L4 5.5 Z" fill="#3A3A3A"/></svg>
</body></html>
